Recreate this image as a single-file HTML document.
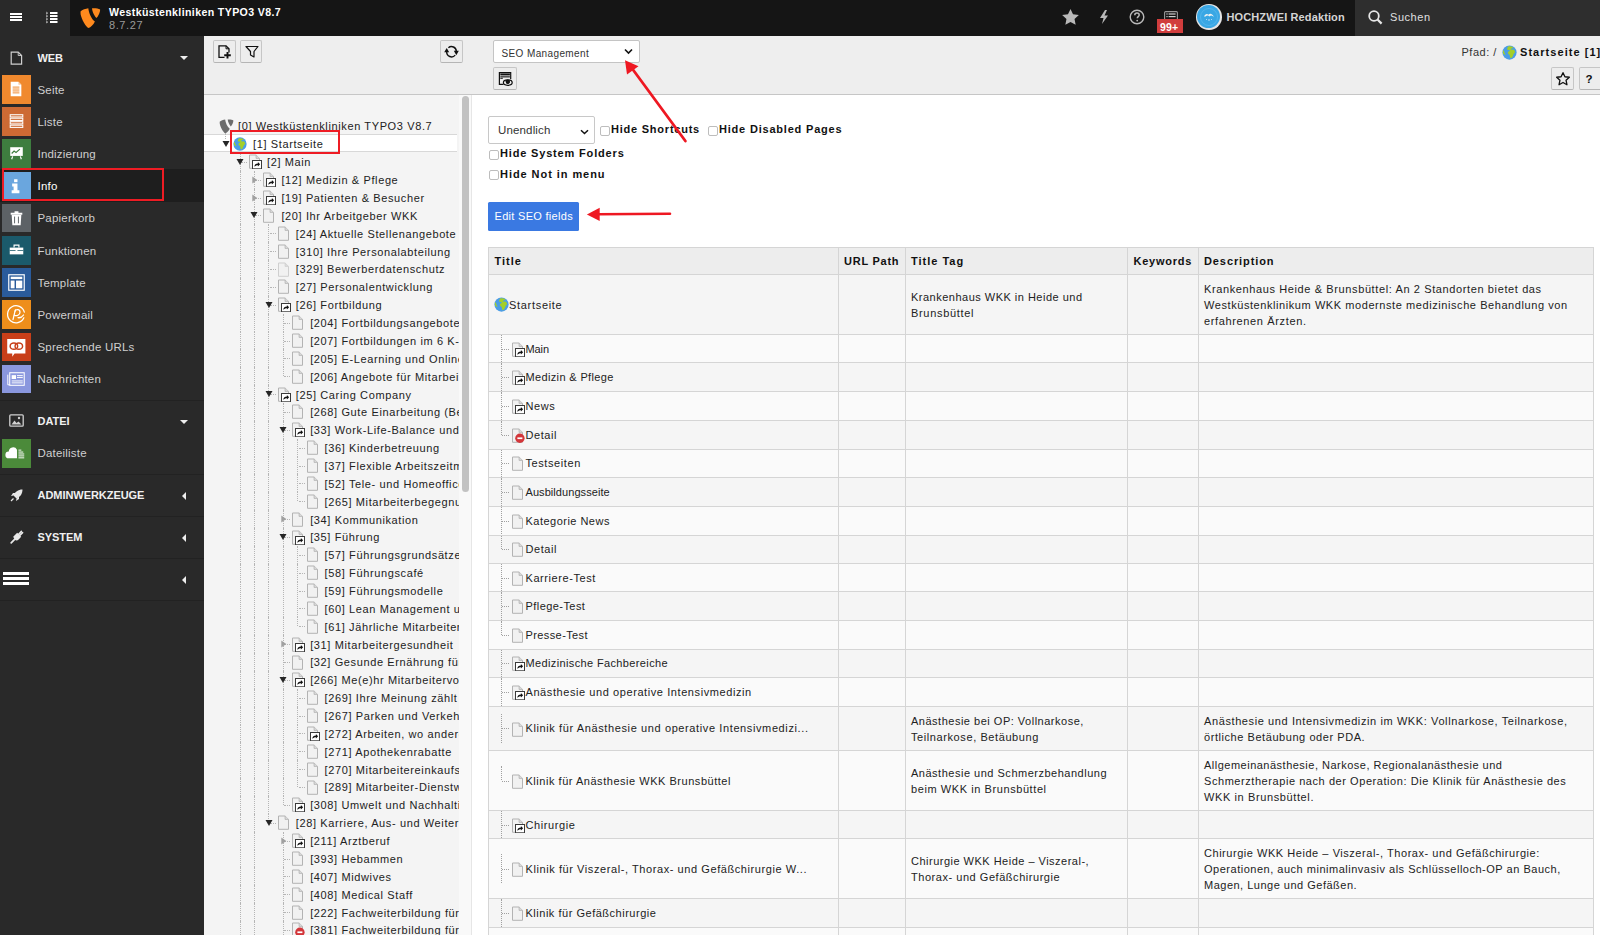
<!DOCTYPE html>
<html><head><meta charset="utf-8"><title>TYPO3 SEO</title><style>
*{box-sizing:border-box;margin:0;padding:0}
html,body{width:1600px;height:935px;overflow:hidden;background:#fff}
body{font-family:"Liberation Sans",sans-serif;font-size:11px;color:#000;position:relative}
.a{position:absolute}
.t{position:absolute;white-space:nowrap;line-height:1}
#top{left:0;top:0;width:1600px;height:36.4px;background:#151515;z-index:5}
#sb{left:0;top:36px;width:204px;height:899px;background:#292929}
#dh{left:204px;top:36px;width:1396px;height:59px;background:#eeeeee;border-bottom:1px solid #c6c6c6}
#tree{left:204px;top:95px;width:267px;height:840px;background:#f4f4f4;overflow:hidden}
#content{left:471px;top:95px;width:1129px;height:840px;background:#fff;border-left:1px solid #e6e6e6}
.btn{position:absolute;width:23px;height:23px;border:1px solid #c6c6c6;border-bottom-color:#b5b5b5;border-radius:2px;background:#ededed}
.sbi{position:absolute;left:2px;width:28.6px;height:28.6px;overflow:hidden}
.sbt{position:absolute;left:37.5px;color:#cfcfcf;font-size:11.5px;letter-spacing:0.2px;white-space:nowrap;line-height:1}
.sbh{position:absolute;left:37.5px;color:#f0f0f0;font-size:11px;font-weight:bold;letter-spacing:-0.05px;white-space:nowrap;line-height:1}
.sep{position:absolute;left:0;width:204px;height:1px;background:#222}
.tn{position:absolute;white-space:nowrap;line-height:1;font-size:11px;letter-spacing:0.62px;color:#222}
.cell{position:absolute;white-space:nowrap;font-size:11px;letter-spacing:0.58px;color:#222;line-height:16px}
.th{position:absolute;white-space:nowrap;font-size:11px;font-weight:bold;letter-spacing:0.75px;color:#111;line-height:1}
</style></head>
<body>

<div id="top" class="a">
<div class="a" style="left:0;top:0;width:70px;height:36.4px;background:#292929"></div>
<div class="a" style="left:10px;top:13px;width:12px;height:2px;background:#fff;box-shadow:0 3px 0 #fff,0 6px 0 #fff"></div>
<svg class="a" style="left:45px;top:11px" width="14" height="13" viewBox="0 0 14 13"><g fill="#fff"><rect x="5" y="1" width="7.5" height="2"/><rect x="5" y="4" width="7.5" height="2"/><rect x="5" y="7" width="7.5" height="2"/><rect x="5" y="10" width="7.5" height="2"/></g><g fill="#cfcfcf"><rect x="1.2" y="1.5" width="1.6" height="1.2"/><rect x="1.2" y="4.5" width="1.6" height="1.2"/><rect x="1.2" y="7.5" width="1.6" height="1.2"/><rect x="1.2" y="10.5" width="1.6" height="1.2"/><rect x="1.2" y="0.5" width=".6" height="12" opacity=".5"/></g></svg>
<svg class="a" style="left:76px;top:4px" width="30" height="28" viewBox="76 4 30 28"><path fill="#ff8a1e" d="M80.5 11.6C82 9.6 86 8.6 88.3 8.2C88.8 13 91.5 19 94.9 21.6C93.2 25 90.6 27.6 88.6 28C86 27 81.6 19.5 80.6 14.2Z"/><path fill="#ff8a1e" d="M92 8.3C95 8 98.5 8.5 100.1 9.6C100.2 12.5 98.2 16.5 96.4 18.1C94.5 16.5 92.2 11.6 92 8.3Z"/></svg>
<div class="t" style="left:109px;top:6.7px;color:#fff;font-weight:bold;font-size:10.6px;letter-spacing:0.38px">Westküstenkliniken TYPO3 V8.7</div>
<div class="t" style="left:109px;top:20px;color:#9a9a9a;font-size:11px;letter-spacing:0.6px">8.7.27</div>
<svg class="a" style="left:1062px;top:9px" width="17" height="16" viewBox="0 0 24 23"><path fill="#b9b9b9" d="M12 0l3.6 7.6 8.4 1-6.2 5.8 1.6 8.3L12 18.6l-7.4 4.1 1.6-8.3L0 8.6l8.4-1z"/></svg>
<svg class="a" style="left:1099px;top:10px" width="10" height="14" viewBox="0 0 10 14"><path fill="#b9b9b9" d="M6 0L1 8h3.5L3 14l6-8.5H5.5L8 0z"/></svg>
<svg class="a" style="left:1129px;top:9px" width="16" height="16" viewBox="0 0 16 16"><circle cx="8" cy="8" r="6.8" fill="none" stroke="#b9b9b9" stroke-width="1.4"/><path d="M5.8 6.2c0-1.3 1-2.1 2.2-2.1s2.2.8 2.2 2c0 1.5-1.9 1.6-1.9 3.1" fill="none" stroke="#b9b9b9" stroke-width="1.5"/><circle cx="8.2" cy="11.6" r="0.9" fill="#b9b9b9"/></svg>
<svg class="a" style="left:1163.5px;top:11px" width="14" height="9" viewBox="0 0 14 9"><rect x="0.6" y="0.6" width="12.8" height="9" rx="1" fill="none" stroke="#9a9a9a" stroke-width="1.1"/><g fill="#cfcfcf"><rect x="2.4" y="2.4" width="1.2" height="1.2"/><rect x="4.6" y="2.4" width="7" height="1.2"/><rect x="2.4" y="5" width="1.2" height="1.2"/><rect x="4.6" y="5" width="7" height="1.2"/></g></svg>
<div class="a" style="left:1156.5px;top:19px;width:26px;height:14px;background:#d13d3d"></div>
<div class="t" style="left:1160px;top:21.5px;color:#fff;font-weight:bold;font-size:10.5px;letter-spacing:0.2px">99+</div>
<div class="a" style="left:1196px;top:4.2px;width:25.5px;height:25.5px;border-radius:50%;background:#e4e4e4"></div>
<div class="a" style="left:1197.2px;top:5.4px;width:23.1px;height:23.1px;border-radius:50%;background:#3aa7e4"></div>
<div class="a" style="left:1199.5px;top:7.7px;width:18.5px;height:18.5px;border-radius:50%;border:1px solid #52b5ec"></div>
<svg class="a" style="left:1202px;top:10px" width="14" height="12" viewBox="0 0 14 12"><path d="M2 6.5C3 4 5 3 6.5 4.8C7.5 3 10 3 12 6.8L10.5 6C9.5 5 8.5 5.5 7.5 6.5C6.5 5.5 5 5 3.5 6.5z" fill="#f2f2f2"/><circle cx="7" cy="10" r=".8" fill="#cfe9fa"/><circle cx="4.5" cy="9.5" r=".5" fill="#cfe9fa"/><circle cx="9.5" cy="9.5" r=".5" fill="#cfe9fa"/></svg>
<div class="t" style="left:1226.5px;top:11.8px;color:#d4d4d4;font-weight:bold;font-size:11px;letter-spacing:0.12px">HOCHZWEI Redaktion</div>
<div class="a" style="left:1355px;top:0;width:245px;height:36.4px;background:#2e2e2e"></div>
<svg class="a" style="left:1368px;top:10px" width="15" height="15" viewBox="0 0 15 15"><circle cx="6" cy="6" r="4.8" fill="none" stroke="#e6e6e6" stroke-width="1.8"/><path d="M9.5 9.5L13.6 13.6" stroke="#e6e6e6" stroke-width="2.2"/></svg>
<div class="t" style="left:1390px;top:11.8px;color:#e0e0e0;font-size:11px;letter-spacing:0.55px">Suchen</div>
</div>
<div id="sb" class="a">
<svg class="a" style="left:10px;top:14.5px" width="13" height="14" viewBox="0 0 13 14"><path d="M1.2 1.1h7l3.4 3.4v8.6H1.2z" fill="none" stroke="#cfcfcf" stroke-width="1.2"/><path d="M8.2 1.1v3.4h3.4" fill="none" stroke="#cfcfcf" stroke-width=".9"/></svg>
<div class="sbh" style="top:16.9px">WEB</div>
<div class="a" style="left:180px;top:20px;width:0;height:0;border-left:4px solid transparent;border-right:4px solid transparent;border-top:4px solid #eee"></div>
<div class="sbi" style="top:39.0px;background:#f0892e"><svg width="29" height="29" viewBox="0 0 30 30"><path d="M9 7h8l3 3v12H9z" fill="#fff"/><path d="M17 7v3h3" fill="#f7c9a0"/><g fill="#f0892e"><rect x="11" y="12" width="7" height="1"/><rect x="11" y="14" width="7" height="1"/><rect x="11" y="16" width="7" height="1"/><rect x="11" y="18" width="7" height="1"/></g></svg></div>
<div class="sbt" style="top:48.6px;color:#cfcfcf">Seite</div>
<div class="sbi" style="top:71.2px;background:#cd6a34"><svg width="29" height="29" viewBox="0 0 30 30"><g fill="none" stroke="#fff" stroke-width="1.1"><rect x="8.5" y="8" width="13" height="2.3"/><rect x="8.5" y="11.6" width="13" height="2.3"/><rect x="8.5" y="15.2" width="13" height="2.3"/><rect x="8.5" y="18.8" width="13" height="2.3"/></g></svg></div>
<div class="sbt" style="top:80.8px;color:#cfcfcf">Liste</div>
<div class="sbi" style="top:103.4px;background:#3e7d3f"><svg width="29" height="29" viewBox="0 0 30 30"><rect x="8.5" y="8.5" width="13" height="9" fill="#fff"/><path d="M10 15l2.5-2.5 2 1.5 4-3.5" stroke="#3e7d3f" stroke-width="1.2" fill="none"/><path d="M11 18l-1 3M19 18l1 3" stroke="#fff" stroke-width="1.2"/></svg></div>
<div class="sbt" style="top:113.0px;color:#cfcfcf">Indizierung</div>
<div class="a" style="left:0;top:133.2px;width:204px;height:33px;background:#1e1e1e"></div>
<div class="sbi" style="top:135.6px;background:#6aa6de"><svg width="29" height="29" viewBox="0 0 30 30"><rect x="12.5" y="7.5" width="3.5" height="3" fill="#fff"/><path d="M10.5 12h5.5v7h2v3h-8v-3h2v-4h-1.5z" fill="#fff"/></svg></div>
<div class="sbt" style="top:145.2px;color:#ffffff">Info</div>
<div class="sbi" style="top:167.8px;background:#5d6266"><svg width="29" height="29" viewBox="0 0 30 30"><path d="M9 9h12v2H9z M13 7.5h4v1.5h-4z" fill="#fff"/><path d="M10 11.5h10l-.7 10.5h-8.6z" fill="#fff"/><path d="M13 13v7M17 13v7" stroke="#5d6266" stroke-width="1"/></svg></div>
<div class="sbt" style="top:177.4px;color:#cfcfcf">Papierkorb</div>
<div class="sbi" style="top:200.0px;background:#1b5a6b"><svg width="29" height="29" viewBox="0 0 30 30"><rect x="8" y="12" width="14" height="7" fill="#fff"/><path d="M12.5 12v-2.5h5V12" fill="none" stroke="#fff" stroke-width="1.2"/><rect x="8" y="14.6" width="14" height=".8" fill="#1b5a6b"/><rect x="14" y="14" width="2" height="2" fill="#fff"/></svg></div>
<div class="sbt" style="top:209.6px;color:#cfcfcf">Funktionen</div>
<div class="sbi" style="top:232.2px;background:#2a5b9b"><svg width="29" height="29" viewBox="0 0 30 30"><rect x="7" y="7" width="16" height="16" fill="none" stroke="#fff" stroke-width="1.2"/><rect x="9" y="9" width="12" height="2.5" fill="#fff"/><rect x="9" y="13" width="4" height="8" fill="#fff"/><rect x="14.5" y="13" width="6.5" height="8" fill="#fff"/></svg></div>
<div class="sbt" style="top:241.8px;color:#cfcfcf">Template</div>
<div class="sbi" style="top:264.4px;background:#ee8e1b"><svg width="29" height="29" viewBox="0 0 30 30"><g fill="none" stroke="#fff" stroke-width="1.3" stroke-linecap="round"><path d="M23.1 12.6A8.8 8.8 0 1 0 22.6 18.4"/><path d="M13.8 10.2L11.4 20.4"/><path d="M13.4 11.6C14.2 9.4 18.6 9.2 18.6 12.6C18.6 15.6 15 17 12.8 15.8"/><path d="M16.6 18.3C18.8 18.6 21 17.5 22.3 15.5"/></g></svg></div>
<div class="sbt" style="top:274.0px;color:#cfcfcf">Powermail</div>
<div class="sbi" style="top:296.6px;background:#c83f19"><svg width="29" height="29" viewBox="0 0 30 30"><path d="M5.4 6.3H24.2V21.2H13L10.6 24.6V21.2H5.4z" fill="#fff"/><g fill="none" stroke="#c83f19" stroke-width="1.5"><ellipse cx="12.3" cy="13.6" rx="3.9" ry="3.3"/><ellipse cx="17.4" cy="13.6" rx="3.9" ry="3.3"/></g></svg></div>
<div class="sbt" style="top:306.2px;color:#cfcfcf">Sprechende URLs</div>
<div class="sbi" style="top:328.8px;background:#8a97de"><svg width="29" height="29" viewBox="0 0 30 30"><rect x="8" y="8" width="15" height="13" fill="none" stroke="#fff" stroke-width="1.1"/><path d="M6 10v10.5h2" fill="none" stroke="#fff" stroke-width="1"/><rect x="10" y="10.5" width="4.5" height="4" fill="#fff"/><g fill="#fff"><rect x="15.5" y="10.5" width="6" height="1"/><rect x="15.5" y="12.5" width="6" height="1"/><rect x="10" y="16" width="11.5" height="1"/><rect x="10" y="18" width="11.5" height="1"/></g></svg></div>
<div class="sbt" style="top:338.4px;color:#cfcfcf">Nachrichten</div>
<div class="sep" style="top:363.5px"></div>
<svg class="a" style="left:9px;top:378px" width="15" height="13" viewBox="0 0 15 13"><rect x="0.8" y="0.8" width="13.4" height="11.4" rx="1" fill="none" stroke="#d0d0d0" stroke-width="1.3"/><path d="M2.5 10.5l3-4 2 2.5 2-1.5 3 3z" fill="#d0d0d0"/><circle cx="10" cy="4" r="1.2" fill="#d0d0d0"/></svg>
<div class="sbh" style="top:380px">DATEI</div>
<div class="a" style="left:180px;top:383.5px;width:0;height:0;border-left:4px solid transparent;border-right:4px solid transparent;border-top:4px solid #eee"></div>
<div class="sbi" style="top:403px;background:#4b8a3a"><svg width="29" height="29" viewBox="0 0 30 30"><path d="M7 20a3.5 3.5 0 010-7 4.5 4.5 0 018.5-2V20z" fill="#fff"/><g fill="#fff"><rect x="17" y="11" width="3" height="1"/><rect x="17" y="13" width="5" height="1"/><rect x="17" y="15" width="6" height="1"/><rect x="17" y="17" width="6" height="1"/><rect x="17" y="19" width="6" height="1"/></g></svg></div>
<div class="sbt" style="top:412.1px">Dateiliste</div>
<div class="sep" style="top:438px"></div>
<svg class="a" style="left:10px;top:453px" width="13" height="13" viewBox="0 0 13 13"><path d="M12.5 0.5C8 0.5 5 3 3.5 6.5L6.5 9.5C10 8 12.5 5 12.5 0.5z" fill="#e8e8e8"/><path d="M3.5 6.5L1 7l2-3h3zM6.5 9.5L6 12l3-2V7z" fill="#e8e8e8"/><path d="M3.5 9.5L1 12" stroke="#e8e8e8" stroke-width="1.3"/></svg>
<div class="sbh" style="top:454px">ADMINWERKZEUGE</div>
<div class="a" style="left:182px;top:455.5px;width:0;height:0;border-top:4px solid transparent;border-bottom:4px solid transparent;border-right:4px solid #eee"></div>
<div class="sep" style="top:480.4px"></div>
<svg class="a" style="left:9.5px;top:494px" width="14" height="14" viewBox="0 0 14 14"><g fill="#e8e8e8"><path d="M3.2 6.8L7.2 2.8L11.2 6.8L8.6 9.4A2.8 2.8 0 0 1 4.6 9.4z" /></g><path d="M8.6 4.2L11.4 1.4M9.8 5.4L12.6 2.6" stroke="#e8e8e8" stroke-width="1.5" stroke-linecap="round"/><path d="M4.6 9.4L1.2 12.8" stroke="#e8e8e8" stroke-width="1.7" stroke-linecap="round"/></svg>
<div class="sbh" style="top:496px">SYSTEM</div>
<div class="a" style="left:182px;top:497.5px;width:0;height:0;border-top:4px solid transparent;border-bottom:4px solid transparent;border-right:4px solid #eee"></div>
<div class="sep" style="top:522.2px"></div>
<div class="a" style="left:3px;top:536px;width:26px;height:3px;background:#fff;box-shadow:0 5px 0 #fff,0 10px 0 #fff"></div>
<div class="a" style="left:182px;top:540px;width:0;height:0;border-top:4px solid transparent;border-bottom:4px solid transparent;border-right:4px solid #eee"></div>
<div class="sep" style="top:564px"></div>
<div class="a" style="left:2px;top:131.8px;width:162px;height:33.6px;border:2px solid #ee1c24"></div>
</div>
<div id="dh" class="a">
<div class="btn" style="left:9px;top:4.299999999999997px;width:22.5px"><svg class="a" style="left:4px;top:4px" width="14" height="14" viewBox="0 0 14 14"><path d="M6.5 12.3H1V.8h7L11 3.8V7.5" fill="none" stroke="#111" stroke-width="1.3"/><path d="M8 .8v3h3" fill="none" stroke="#111" stroke-width="1"/><path d="M9.5 7v6.5M6.2 10.3h6.6" stroke="#111" stroke-width="1.9"/></svg></div>
<div class="btn" style="left:35.5px;top:4.299999999999997px;width:22.5px"><svg class="a" style="left:4px;top:4px" width="14" height="14" viewBox="0 0 14 14"><path d="M1 1.5h12L9 6.5v5.5L5.5 10V6.5z" fill="none" stroke="#111" stroke-width="1.2" stroke-linejoin="round"/></svg></div>
<div class="btn" style="left:236px;top:4.299999999999997px;width:22.5px"><svg class="a" style="left:-1px;top:-1px" width="23" height="23" viewBox="440 40.3 23 23"><g fill="none" stroke="#111" stroke-width="1.4"><path d="M448.4 48 A4.8 4.8 0 0 1 456.3 51.6"/><path d="M455.2 55.4 A4.8 4.8 0 0 1 446.7 52.1"/></g><path d="M444.2 52.6 L449.2 52.6 L446.7 48.2z" fill="#111"/><path d="M453.8 51.1 L458.8 51.1 L456.3 55.5z" fill="#111"/></svg></div>
<div class="a" style="left:289.2px;top:4.299999999999997px;width:146.5px;height:23px;background:#fff;border:1px solid #c4c4c4;border-radius:2px"></div>
<div class="t" style="left:297.5px;top:12.5px;color:#333;font-size:10px;letter-spacing:0.38px">SEO Management</div>
<svg class="a" style="left:420px;top:12px" width="9" height="7" viewBox="0 0 9 7"><path d="M1 1.5l3.5 3.5 3.5-3.5" fill="none" stroke="#111" stroke-width="1.6"/></svg>
<div class="btn" style="left:289px;top:31px;width:23.5px"><svg class="a" style="left:-1px;top:-1px" width="23.5" height="23" viewBox="493 67 23.5 23"><path d="M503.5 84.4H499.4V72.6H510.7V79" fill="none" stroke="#111" stroke-width="1.2"/><rect x="500.3" y="73.5" width="9.6" height="1.9" fill="#111"/><rect x="500.3" y="76.3" width="9.6" height="1.1" fill="#111"/><path d="M500.3 78.3h2.5" stroke="#111" stroke-width="1"/><ellipse cx="507.8" cy="82.6" rx="4.4" ry="2.7" fill="#ededed" stroke="#111" stroke-width="1.2"/><path d="M505.6 81.6A2.2 2.2 0 0 1 510 81.6A2.2 2.2 0 0 1 505.6 81.6" fill="#111"/><circle cx="507.8" cy="82.2" r="1.7" fill="#111"/></svg></div>
<div class="t" style="left:1257.5px;top:11.299999999999997px;color:#333;font-size:11px;letter-spacing:0.52px">Pfad: /</div>
<div class="a" style="left:1297.5px;top:9px;width:15px;height:15px"><svg width="15" height="15" viewBox="0 0 16 16"><circle cx="8" cy="8" r="7.6" fill="#4b9de6"/><path d="M6.6 1.6C8.4 1.2 10.6 1.5 12.2 2.6C11.6 3.4 10.4 3.3 9.6 3.9C9.2 4.5 10 5 10.8 5C11.6 5 12 4.6 12.6 5C13.4 5.6 13.8 6.6 14 7.6C13.4 8.4 12.6 9 12.2 10C11.8 11.2 11.4 12.4 10.6 13.4C10 14.2 9.2 14.4 8.8 13.6C8.4 12.6 8.6 11.4 8 10.6C7.4 9.8 6.4 9.6 6.2 8.6C6 7.6 6.8 6.8 7.6 6.6C8.2 6.4 8.4 5.8 7.8 5.4C7 5 6 5.6 5.6 4.8C5.3 4 5.8 2.8 6.6 1.6z" fill="#a3cf2a"/><path d="M1.2 5.6C2 6 2.6 6.8 2.6 7.8C2.6 8.8 3.4 9.4 3.8 10.2C3 10.6 2 10 1.3 9.2C0.9 8 0.9 6.6 1.2 5.6z" fill="#a3cf2a"/></svg></div>
<div class="t" style="left:1316px;top:11.299999999999997px;color:#111;font-weight:bold;font-size:11px;letter-spacing:1.05px">Startseite [1]</div>
<div class="btn" style="left:1347px;top:31px;width:22.5px"><svg class="a" style="left:3px;top:3px" width="16" height="16" viewBox="0 0 24 24"><path fill="none" stroke="#111" stroke-width="2" stroke-linejoin="round" d="M12 2.5l2.9 6.1 6.6.8-4.9 4.6 1.3 6.6L12 17.3l-5.9 3.3 1.3-6.6-4.9-4.6 6.6-.8z"/></svg></div>
<div class="btn" style="left:1374.5px;top:31px;width:30px"></div>
<div class="t" style="left:1381.5px;top:37.5px;color:#111;font-weight:bold;font-size:11.5px">?</div>
</div>
<div id="tree" class="a">
<svg class="a" style="left:14.5px;top:23.5px" width="15" height="15" viewBox="79.5 7.5 21.5 21.5"><path fill="#6c6c6c" d="M80.5 11.6C82 9.6 86 8.6 88.3 8.2C88.8 13 91.5 19 94.9 21.6C93.2 25 90.6 27.6 88.6 28C86 27 81.6 19.5 80.6 14.2Z"/><path fill="#6c6c6c" d="M92 8.3C95 8 98.5 8.5 100.1 9.6C100.2 12.5 98.2 16.5 96.4 18.1C94.5 16.5 92.2 11.6 92 8.3Z"/></svg>
<div class="tn" style="left:34px;top:25.599999999999994px">[0] Westküstenkliniken TYPO3 V8.7</div>
<div class="a" style="left:0;top:39px;width:253px;height:18px;background:#fff;border-top:1px solid #d8d8d8;border-bottom:1px solid #d8d8d8"></div>
<div class="a" style="left:21px;top:38px;width:1px;height:6px;border-left:1px dotted #b5b5b5"></div>
<svg class="a" style="left:17.6px;top:45.0px" width="8" height="8" viewBox="0 0 8 8"><path d="M0.5 1H7.5L4 7z" fill="#262626"/></svg>
<div class="a" style="left:29px;top:42.0px;width:14px;height:14px"><svg width="14" height="14" viewBox="0 0 16 16"><circle cx="8" cy="8" r="7.6" fill="#4b9de6"/><path d="M6.6 1.6C8.4 1.2 10.6 1.5 12.2 2.6C11.6 3.4 10.4 3.3 9.6 3.9C9.2 4.5 10 5 10.8 5C11.6 5 12 4.6 12.6 5C13.4 5.6 13.8 6.6 14 7.6C13.4 8.4 12.6 9 12.2 10C11.8 11.2 11.4 12.4 10.6 13.4C10 14.2 9.2 14.4 8.8 13.6C8.4 12.6 8.6 11.4 8 10.6C7.4 9.8 6.4 9.6 6.2 8.6C6 7.6 6.8 6.8 7.6 6.6C8.2 6.4 8.4 5.8 7.8 5.4C7 5 6 5.6 5.6 4.8C5.3 4 5.8 2.8 6.6 1.6z" fill="#a3cf2a"/><path d="M1.2 5.6C2 6 2.6 6.8 2.6 7.8C2.6 8.8 3.4 9.4 3.8 10.2C3 10.6 2 10 1.3 9.2C0.9 8 0.9 6.6 1.2 5.6z" fill="#a3cf2a"/></svg></div>
<div class="tn" style="left:49.0px;top:44.4px">[1] Startseite</div>
<div class="a" style="left:35.5px;top:57.9px;width:1px;height:17.9px;border-left:1px dotted #b5b5b5"></div>
<div class="a" style="left:37.0px;top:66.9px;width:6px;height:1px;border-top:1px dotted #b5b5b5"></div>
<svg class="a" style="left:32.0px;top:62.9px" width="8" height="8" viewBox="0 0 8 8"><path d="M0.5 1H7.5L4 7z" fill="#262626"/></svg>
<div class="a" style="left:45.0px;top:59.4px;width:13px;height:15px"><svg width="13" height="15" viewBox="0 0 13 15"><path d="M.5 1h6.6l3.4 3.4V14.3H.5z" fill="#f1f1f1" stroke="#b3b3b3"/><path d="M7.1 1v3.4h3.4" fill="#dcdcdc" stroke="#b3b3b3" stroke-width=".8"/><rect x="3.5" y="6.5" width="9" height="8.3" fill="#fff" stroke="#3a3a3a" stroke-width="1"/><path d="M5.3 12.8c.2-2.2 1.5-3.3 3.6-3.3v-1.4l2.2 2.2-2.2 2.2v-1.3c-1.4 0-2.6.5-3.6 1.6z" fill="#111"/></svg></div>
<div class="tn" style="left:63.0px;top:62.3px">[2] Main</div>
<div class="a" style="left:49.9px;top:75.8px;width:1px;height:17.9px;border-left:1px dotted #b5b5b5"></div>
<div class="a" style="left:51.4px;top:84.7px;width:6px;height:1px;border-top:1px dotted #b5b5b5"></div>
<div class="a" style="left:35.5px;top:75.8px;width:1px;height:17.9px;border-left:1px dotted #b5b5b5"></div>
<svg class="a" style="left:47.9px;top:80.7px" width="8" height="8" viewBox="0 0 8 8"><path d="M0.3 0.6V7.4L5.3 4z" fill="#a0a0a0"/></svg>
<div class="a" style="left:59.4px;top:77.2px;width:13px;height:15px"><svg width="13" height="15" viewBox="0 0 13 15"><path d="M.5 1h6.6l3.4 3.4V14.3H.5z" fill="#f1f1f1" stroke="#b3b3b3"/><path d="M7.1 1v3.4h3.4" fill="#dcdcdc" stroke="#b3b3b3" stroke-width=".8"/><rect x="3.5" y="6.5" width="9" height="8.3" fill="#fff" stroke="#3a3a3a" stroke-width="1"/><path d="M5.3 12.8c.2-2.2 1.5-3.3 3.6-3.3v-1.4l2.2 2.2-2.2 2.2v-1.3c-1.4 0-2.6.5-3.6 1.6z" fill="#111"/></svg></div>
<div class="tn" style="left:77.4px;top:80.1px">[12] Medizin &amp; Pflege</div>
<div class="a" style="left:49.9px;top:93.7px;width:1px;height:17.9px;border-left:1px dotted #b5b5b5"></div>
<div class="a" style="left:51.4px;top:102.6px;width:6px;height:1px;border-top:1px dotted #b5b5b5"></div>
<div class="a" style="left:35.5px;top:93.7px;width:1px;height:17.9px;border-left:1px dotted #b5b5b5"></div>
<svg class="a" style="left:47.9px;top:98.6px" width="8" height="8" viewBox="0 0 8 8"><path d="M0.3 0.6V7.4L5.3 4z" fill="#a0a0a0"/></svg>
<div class="a" style="left:59.4px;top:95.1px;width:13px;height:15px"><svg width="13" height="15" viewBox="0 0 13 15"><path d="M.5 1h6.6l3.4 3.4V14.3H.5z" fill="#f1f1f1" stroke="#b3b3b3"/><path d="M7.1 1v3.4h3.4" fill="#dcdcdc" stroke="#b3b3b3" stroke-width=".8"/><rect x="3.5" y="6.5" width="9" height="8.3" fill="#fff" stroke="#3a3a3a" stroke-width="1"/><path d="M5.3 12.8c.2-2.2 1.5-3.3 3.6-3.3v-1.4l2.2 2.2-2.2 2.2v-1.3c-1.4 0-2.6.5-3.6 1.6z" fill="#111"/></svg></div>
<div class="tn" style="left:77.4px;top:98.0px">[19] Patienten &amp; Besucher</div>
<div class="a" style="left:49.9px;top:111.5px;width:1px;height:17.9px;border-left:1px dotted #b5b5b5"></div>
<div class="a" style="left:51.4px;top:120.4px;width:6px;height:1px;border-top:1px dotted #b5b5b5"></div>
<div class="a" style="left:35.5px;top:111.5px;width:1px;height:17.9px;border-left:1px dotted #b5b5b5"></div>
<svg class="a" style="left:46.4px;top:116.4px" width="8" height="8" viewBox="0 0 8 8"><path d="M0.5 1H7.5L4 7z" fill="#262626"/></svg>
<div class="a" style="left:59.4px;top:112.9px;width:13px;height:15px"><svg width="13" height="15" viewBox="0 0 13 15"><path d="M.5 1h6.6l3.4 3.4V14.3H.5z" fill="#f1f1f1" stroke="#b3b3b3"/><path d="M7.1 1v3.4h3.4" fill="#dcdcdc" stroke="#b3b3b3" stroke-width=".8"/></svg></div>
<div class="tn" style="left:77.4px;top:115.8px">[20] Ihr Arbeitgeber WKK</div>
<div class="a" style="left:64.3px;top:129.4px;width:1px;height:17.9px;border-left:1px dotted #b5b5b5"></div>
<div class="a" style="left:65.8px;top:138.3px;width:6px;height:1px;border-top:1px dotted #b5b5b5"></div>
<div class="a" style="left:35.5px;top:129.4px;width:1px;height:17.9px;border-left:1px dotted #b5b5b5"></div>
<div class="a" style="left:49.9px;top:129.4px;width:1px;height:17.9px;border-left:1px dotted #b5b5b5"></div>
<div class="a" style="left:73.8px;top:130.8px;width:13px;height:15px"><svg width="13" height="15" viewBox="0 0 13 15"><path d="M.5 1h6.6l3.4 3.4V14.3H.5z" fill="#f1f1f1" stroke="#b3b3b3"/><path d="M7.1 1v3.4h3.4" fill="#dcdcdc" stroke="#b3b3b3" stroke-width=".8"/></svg></div>
<div class="tn" style="left:91.8px;top:133.7px">[24] Aktuelle Stellenangebote</div>
<div class="a" style="left:64.3px;top:147.2px;width:1px;height:17.9px;border-left:1px dotted #b5b5b5"></div>
<div class="a" style="left:65.8px;top:156.2px;width:6px;height:1px;border-top:1px dotted #b5b5b5"></div>
<div class="a" style="left:35.5px;top:147.2px;width:1px;height:17.9px;border-left:1px dotted #b5b5b5"></div>
<div class="a" style="left:49.9px;top:147.2px;width:1px;height:17.9px;border-left:1px dotted #b5b5b5"></div>
<div class="a" style="left:73.8px;top:148.7px;width:13px;height:15px"><svg width="13" height="15" viewBox="0 0 13 15"><path d="M.5 1h6.6l3.4 3.4V14.3H.5z" fill="#f1f1f1" stroke="#b3b3b3"/><path d="M7.1 1v3.4h3.4" fill="#dcdcdc" stroke="#b3b3b3" stroke-width=".8"/></svg></div>
<div class="tn" style="left:91.8px;top:151.6px">[310] Ihre Personalabteilung</div>
<div class="a" style="left:64.3px;top:165.1px;width:1px;height:17.9px;border-left:1px dotted #b5b5b5"></div>
<div class="a" style="left:65.8px;top:174.0px;width:6px;height:1px;border-top:1px dotted #b5b5b5"></div>
<div class="a" style="left:35.5px;top:165.1px;width:1px;height:17.9px;border-left:1px dotted #b5b5b5"></div>
<div class="a" style="left:49.9px;top:165.1px;width:1px;height:17.9px;border-left:1px dotted #b5b5b5"></div>
<div class="a" style="left:73.8px;top:166.5px;width:13px;height:15px"><svg width="13" height="15" viewBox="0 0 13 15"><path d="M.5 1h6.6l3.4 3.4V14.3H.5z" fill="#f1f1f1" stroke="#cfcfcf"/><path d="M7.1 1v3.4h3.4" fill="#dcdcdc" stroke="#cfcfcf" stroke-width=".8"/></svg></div>
<div class="tn" style="left:91.8px;top:169.4px">[329] Bewerberdatenschutz</div>
<div class="a" style="left:64.3px;top:183.0px;width:1px;height:17.9px;border-left:1px dotted #b5b5b5"></div>
<div class="a" style="left:65.8px;top:191.9px;width:6px;height:1px;border-top:1px dotted #b5b5b5"></div>
<div class="a" style="left:35.5px;top:183.0px;width:1px;height:17.9px;border-left:1px dotted #b5b5b5"></div>
<div class="a" style="left:49.9px;top:183.0px;width:1px;height:17.9px;border-left:1px dotted #b5b5b5"></div>
<div class="a" style="left:73.8px;top:184.4px;width:13px;height:15px"><svg width="13" height="15" viewBox="0 0 13 15"><path d="M.5 1h6.6l3.4 3.4V14.3H.5z" fill="#f1f1f1" stroke="#b3b3b3"/><path d="M7.1 1v3.4h3.4" fill="#dcdcdc" stroke="#b3b3b3" stroke-width=".8"/></svg></div>
<div class="tn" style="left:91.8px;top:187.3px">[27] Personalentwicklung</div>
<div class="a" style="left:64.3px;top:200.8px;width:1px;height:17.9px;border-left:1px dotted #b5b5b5"></div>
<div class="a" style="left:65.8px;top:209.8px;width:6px;height:1px;border-top:1px dotted #b5b5b5"></div>
<div class="a" style="left:35.5px;top:200.8px;width:1px;height:17.9px;border-left:1px dotted #b5b5b5"></div>
<div class="a" style="left:49.9px;top:200.8px;width:1px;height:17.9px;border-left:1px dotted #b5b5b5"></div>
<svg class="a" style="left:60.8px;top:205.8px" width="8" height="8" viewBox="0 0 8 8"><path d="M0.5 1H7.5L4 7z" fill="#262626"/></svg>
<div class="a" style="left:73.8px;top:202.3px;width:13px;height:15px"><svg width="13" height="15" viewBox="0 0 13 15"><path d="M.5 1h6.6l3.4 3.4V14.3H.5z" fill="#f1f1f1" stroke="#b3b3b3"/><path d="M7.1 1v3.4h3.4" fill="#dcdcdc" stroke="#b3b3b3" stroke-width=".8"/><rect x="3.5" y="6.5" width="9" height="8.3" fill="#fff" stroke="#3a3a3a" stroke-width="1"/><path d="M5.3 12.8c.2-2.2 1.5-3.3 3.6-3.3v-1.4l2.2 2.2-2.2 2.2v-1.3c-1.4 0-2.6.5-3.6 1.6z" fill="#111"/></svg></div>
<div class="tn" style="left:91.8px;top:205.2px">[26] Fortbildung</div>
<div class="a" style="left:78.7px;top:218.7px;width:1px;height:17.9px;border-left:1px dotted #b5b5b5"></div>
<div class="a" style="left:80.2px;top:227.6px;width:6px;height:1px;border-top:1px dotted #b5b5b5"></div>
<div class="a" style="left:35.5px;top:218.7px;width:1px;height:17.9px;border-left:1px dotted #b5b5b5"></div>
<div class="a" style="left:49.9px;top:218.7px;width:1px;height:17.9px;border-left:1px dotted #b5b5b5"></div>
<div class="a" style="left:64.3px;top:218.7px;width:1px;height:17.9px;border-left:1px dotted #b5b5b5"></div>
<div class="a" style="left:88.2px;top:220.1px;width:13px;height:15px"><svg width="13" height="15" viewBox="0 0 13 15"><path d="M.5 1h6.6l3.4 3.4V14.3H.5z" fill="#f1f1f1" stroke="#b3b3b3"/><path d="M7.1 1v3.4h3.4" fill="#dcdcdc" stroke="#b3b3b3" stroke-width=".8"/></svg></div>
<div class="tn" style="left:106.2px;top:223.0px">[204] Fortbildungsangebote</div>
<div class="a" style="left:78.7px;top:236.6px;width:1px;height:17.9px;border-left:1px dotted #b5b5b5"></div>
<div class="a" style="left:80.2px;top:245.5px;width:6px;height:1px;border-top:1px dotted #b5b5b5"></div>
<div class="a" style="left:35.5px;top:236.6px;width:1px;height:17.9px;border-left:1px dotted #b5b5b5"></div>
<div class="a" style="left:49.9px;top:236.6px;width:1px;height:17.9px;border-left:1px dotted #b5b5b5"></div>
<div class="a" style="left:64.3px;top:236.6px;width:1px;height:17.9px;border-left:1px dotted #b5b5b5"></div>
<div class="a" style="left:88.2px;top:238.0px;width:13px;height:15px"><svg width="13" height="15" viewBox="0 0 13 15"><path d="M.5 1h6.6l3.4 3.4V14.3H.5z" fill="#f1f1f1" stroke="#b3b3b3"/><path d="M7.1 1v3.4h3.4" fill="#dcdcdc" stroke="#b3b3b3" stroke-width=".8"/></svg></div>
<div class="tn" style="left:106.2px;top:240.9px">[207] Fortbildungen im 6 K-Modell</div>
<div class="a" style="left:78.7px;top:254.4px;width:1px;height:17.9px;border-left:1px dotted #b5b5b5"></div>
<div class="a" style="left:80.2px;top:263.3px;width:6px;height:1px;border-top:1px dotted #b5b5b5"></div>
<div class="a" style="left:35.5px;top:254.4px;width:1px;height:17.9px;border-left:1px dotted #b5b5b5"></div>
<div class="a" style="left:49.9px;top:254.4px;width:1px;height:17.9px;border-left:1px dotted #b5b5b5"></div>
<div class="a" style="left:64.3px;top:254.4px;width:1px;height:17.9px;border-left:1px dotted #b5b5b5"></div>
<div class="a" style="left:88.2px;top:255.8px;width:13px;height:15px"><svg width="13" height="15" viewBox="0 0 13 15"><path d="M.5 1h6.6l3.4 3.4V14.3H.5z" fill="#f1f1f1" stroke="#b3b3b3"/><path d="M7.1 1v3.4h3.4" fill="#dcdcdc" stroke="#b3b3b3" stroke-width=".8"/></svg></div>
<div class="tn" style="left:106.2px;top:258.7px">[205] E-Learning und Online-Kurse</div>
<div class="a" style="left:78.7px;top:272.3px;width:1px;height:8.9px;border-left:1px dotted #b5b5b5"></div>
<div class="a" style="left:80.2px;top:281.2px;width:6px;height:1px;border-top:1px dotted #b5b5b5"></div>
<div class="a" style="left:35.5px;top:272.3px;width:1px;height:17.9px;border-left:1px dotted #b5b5b5"></div>
<div class="a" style="left:49.9px;top:272.3px;width:1px;height:17.9px;border-left:1px dotted #b5b5b5"></div>
<div class="a" style="left:64.3px;top:272.3px;width:1px;height:17.9px;border-left:1px dotted #b5b5b5"></div>
<div class="a" style="left:88.2px;top:273.7px;width:13px;height:15px"><svg width="13" height="15" viewBox="0 0 13 15"><path d="M.5 1h6.6l3.4 3.4V14.3H.5z" fill="#f1f1f1" stroke="#b3b3b3"/><path d="M7.1 1v3.4h3.4" fill="#dcdcdc" stroke="#b3b3b3" stroke-width=".8"/></svg></div>
<div class="tn" style="left:106.2px;top:276.6px">[206] Angebote für Mitarbeiter</div>
<div class="a" style="left:64.3px;top:290.1px;width:1px;height:17.9px;border-left:1px dotted #b5b5b5"></div>
<div class="a" style="left:65.8px;top:299.1px;width:6px;height:1px;border-top:1px dotted #b5b5b5"></div>
<div class="a" style="left:35.5px;top:290.1px;width:1px;height:17.9px;border-left:1px dotted #b5b5b5"></div>
<div class="a" style="left:49.9px;top:290.1px;width:1px;height:17.9px;border-left:1px dotted #b5b5b5"></div>
<svg class="a" style="left:60.8px;top:295.1px" width="8" height="8" viewBox="0 0 8 8"><path d="M0.5 1H7.5L4 7z" fill="#262626"/></svg>
<div class="a" style="left:73.8px;top:291.6px;width:13px;height:15px"><svg width="13" height="15" viewBox="0 0 13 15"><path d="M.5 1h6.6l3.4 3.4V14.3H.5z" fill="#f1f1f1" stroke="#b3b3b3"/><path d="M7.1 1v3.4h3.4" fill="#dcdcdc" stroke="#b3b3b3" stroke-width=".8"/><rect x="3.5" y="6.5" width="9" height="8.3" fill="#fff" stroke="#3a3a3a" stroke-width="1"/><path d="M5.3 12.8c.2-2.2 1.5-3.3 3.6-3.3v-1.4l2.2 2.2-2.2 2.2v-1.3c-1.4 0-2.6.5-3.6 1.6z" fill="#111"/></svg></div>
<div class="tn" style="left:91.8px;top:294.5px">[25] Caring Company</div>
<div class="a" style="left:78.7px;top:308.0px;width:1px;height:17.9px;border-left:1px dotted #b5b5b5"></div>
<div class="a" style="left:80.2px;top:316.9px;width:6px;height:1px;border-top:1px dotted #b5b5b5"></div>
<div class="a" style="left:35.5px;top:308.0px;width:1px;height:17.9px;border-left:1px dotted #b5b5b5"></div>
<div class="a" style="left:49.9px;top:308.0px;width:1px;height:17.9px;border-left:1px dotted #b5b5b5"></div>
<div class="a" style="left:64.3px;top:308.0px;width:1px;height:17.9px;border-left:1px dotted #b5b5b5"></div>
<div class="a" style="left:88.2px;top:309.4px;width:13px;height:15px"><svg width="13" height="15" viewBox="0 0 13 15"><path d="M.5 1h6.6l3.4 3.4V14.3H.5z" fill="#f1f1f1" stroke="#b3b3b3"/><path d="M7.1 1v3.4h3.4" fill="#dcdcdc" stroke="#b3b3b3" stroke-width=".8"/></svg></div>
<div class="tn" style="left:106.2px;top:312.3px">[268] Gute Einarbeitung (Begleitung)</div>
<div class="a" style="left:78.7px;top:325.9px;width:1px;height:17.9px;border-left:1px dotted #b5b5b5"></div>
<div class="a" style="left:80.2px;top:334.8px;width:6px;height:1px;border-top:1px dotted #b5b5b5"></div>
<div class="a" style="left:35.5px;top:325.9px;width:1px;height:17.9px;border-left:1px dotted #b5b5b5"></div>
<div class="a" style="left:49.9px;top:325.9px;width:1px;height:17.9px;border-left:1px dotted #b5b5b5"></div>
<div class="a" style="left:64.3px;top:325.9px;width:1px;height:17.9px;border-left:1px dotted #b5b5b5"></div>
<svg class="a" style="left:75.2px;top:330.8px" width="8" height="8" viewBox="0 0 8 8"><path d="M0.5 1H7.5L4 7z" fill="#262626"/></svg>
<div class="a" style="left:88.2px;top:327.3px;width:13px;height:15px"><svg width="13" height="15" viewBox="0 0 13 15"><path d="M.5 1h6.6l3.4 3.4V14.3H.5z" fill="#f1f1f1" stroke="#b3b3b3"/><path d="M7.1 1v3.4h3.4" fill="#dcdcdc" stroke="#b3b3b3" stroke-width=".8"/><rect x="3.5" y="6.5" width="9" height="8.3" fill="#fff" stroke="#3a3a3a" stroke-width="1"/><path d="M5.3 12.8c.2-2.2 1.5-3.3 3.6-3.3v-1.4l2.2 2.2-2.2 2.2v-1.3c-1.4 0-2.6.5-3.6 1.6z" fill="#111"/></svg></div>
<div class="tn" style="left:106.2px;top:330.2px">[33] Work-Life-Balance und Familie</div>
<div class="a" style="left:93.1px;top:343.7px;width:1px;height:17.9px;border-left:1px dotted #b5b5b5"></div>
<div class="a" style="left:94.6px;top:352.7px;width:6px;height:1px;border-top:1px dotted #b5b5b5"></div>
<div class="a" style="left:35.5px;top:343.7px;width:1px;height:17.9px;border-left:1px dotted #b5b5b5"></div>
<div class="a" style="left:49.9px;top:343.7px;width:1px;height:17.9px;border-left:1px dotted #b5b5b5"></div>
<div class="a" style="left:64.3px;top:343.7px;width:1px;height:17.9px;border-left:1px dotted #b5b5b5"></div>
<div class="a" style="left:78.7px;top:343.7px;width:1px;height:17.9px;border-left:1px dotted #b5b5b5"></div>
<div class="a" style="left:102.6px;top:345.2px;width:13px;height:15px"><svg width="13" height="15" viewBox="0 0 13 15"><path d="M.5 1h6.6l3.4 3.4V14.3H.5z" fill="#f1f1f1" stroke="#b3b3b3"/><path d="M7.1 1v3.4h3.4" fill="#dcdcdc" stroke="#b3b3b3" stroke-width=".8"/></svg></div>
<div class="tn" style="left:120.6px;top:348.1px">[36] Kinderbetreuung</div>
<div class="a" style="left:93.1px;top:361.6px;width:1px;height:17.9px;border-left:1px dotted #b5b5b5"></div>
<div class="a" style="left:94.6px;top:370.5px;width:6px;height:1px;border-top:1px dotted #b5b5b5"></div>
<div class="a" style="left:35.5px;top:361.6px;width:1px;height:17.9px;border-left:1px dotted #b5b5b5"></div>
<div class="a" style="left:49.9px;top:361.6px;width:1px;height:17.9px;border-left:1px dotted #b5b5b5"></div>
<div class="a" style="left:64.3px;top:361.6px;width:1px;height:17.9px;border-left:1px dotted #b5b5b5"></div>
<div class="a" style="left:78.7px;top:361.6px;width:1px;height:17.9px;border-left:1px dotted #b5b5b5"></div>
<div class="a" style="left:102.6px;top:363.0px;width:13px;height:15px"><svg width="13" height="15" viewBox="0 0 13 15"><path d="M.5 1h6.6l3.4 3.4V14.3H.5z" fill="#f1f1f1" stroke="#b3b3b3"/><path d="M7.1 1v3.4h3.4" fill="#dcdcdc" stroke="#b3b3b3" stroke-width=".8"/></svg></div>
<div class="tn" style="left:120.6px;top:365.9px">[37] Flexible Arbeitszeitmodelle</div>
<div class="a" style="left:93.1px;top:379.4px;width:1px;height:17.9px;border-left:1px dotted #b5b5b5"></div>
<div class="a" style="left:94.6px;top:388.4px;width:6px;height:1px;border-top:1px dotted #b5b5b5"></div>
<div class="a" style="left:35.5px;top:379.4px;width:1px;height:17.9px;border-left:1px dotted #b5b5b5"></div>
<div class="a" style="left:49.9px;top:379.4px;width:1px;height:17.9px;border-left:1px dotted #b5b5b5"></div>
<div class="a" style="left:64.3px;top:379.4px;width:1px;height:17.9px;border-left:1px dotted #b5b5b5"></div>
<div class="a" style="left:78.7px;top:379.4px;width:1px;height:17.9px;border-left:1px dotted #b5b5b5"></div>
<div class="a" style="left:102.6px;top:380.9px;width:13px;height:15px"><svg width="13" height="15" viewBox="0 0 13 15"><path d="M.5 1h6.6l3.4 3.4V14.3H.5z" fill="#f1f1f1" stroke="#b3b3b3"/><path d="M7.1 1v3.4h3.4" fill="#dcdcdc" stroke="#b3b3b3" stroke-width=".8"/></svg></div>
<div class="tn" style="left:120.6px;top:383.8px">[52] Tele- und Homeoffice</div>
<div class="a" style="left:93.1px;top:397.3px;width:1px;height:8.9px;border-left:1px dotted #b5b5b5"></div>
<div class="a" style="left:94.6px;top:406.2px;width:6px;height:1px;border-top:1px dotted #b5b5b5"></div>
<div class="a" style="left:35.5px;top:397.3px;width:1px;height:17.9px;border-left:1px dotted #b5b5b5"></div>
<div class="a" style="left:49.9px;top:397.3px;width:1px;height:17.9px;border-left:1px dotted #b5b5b5"></div>
<div class="a" style="left:64.3px;top:397.3px;width:1px;height:17.9px;border-left:1px dotted #b5b5b5"></div>
<div class="a" style="left:78.7px;top:397.3px;width:1px;height:17.9px;border-left:1px dotted #b5b5b5"></div>
<div class="a" style="left:102.6px;top:398.7px;width:13px;height:15px"><svg width="13" height="15" viewBox="0 0 13 15"><path d="M.5 1h6.6l3.4 3.4V14.3H.5z" fill="#f1f1f1" stroke="#b3b3b3"/><path d="M7.1 1v3.4h3.4" fill="#dcdcdc" stroke="#b3b3b3" stroke-width=".8"/></svg></div>
<div class="tn" style="left:120.6px;top:401.6px">[265] Mitarbeiterbegegnungen</div>
<div class="a" style="left:78.7px;top:415.2px;width:1px;height:17.9px;border-left:1px dotted #b5b5b5"></div>
<div class="a" style="left:80.2px;top:424.1px;width:6px;height:1px;border-top:1px dotted #b5b5b5"></div>
<div class="a" style="left:35.5px;top:415.2px;width:1px;height:17.9px;border-left:1px dotted #b5b5b5"></div>
<div class="a" style="left:49.9px;top:415.2px;width:1px;height:17.9px;border-left:1px dotted #b5b5b5"></div>
<div class="a" style="left:64.3px;top:415.2px;width:1px;height:17.9px;border-left:1px dotted #b5b5b5"></div>
<svg class="a" style="left:76.7px;top:420.1px" width="8" height="8" viewBox="0 0 8 8"><path d="M0.3 0.6V7.4L5.3 4z" fill="#a0a0a0"/></svg>
<div class="a" style="left:88.2px;top:416.6px;width:13px;height:15px"><svg width="13" height="15" viewBox="0 0 13 15"><path d="M.5 1h6.6l3.4 3.4V14.3H.5z" fill="#f1f1f1" stroke="#b3b3b3"/><path d="M7.1 1v3.4h3.4" fill="#dcdcdc" stroke="#b3b3b3" stroke-width=".8"/></svg></div>
<div class="tn" style="left:106.2px;top:419.5px">[34] Kommunikation</div>
<div class="a" style="left:78.7px;top:433.0px;width:1px;height:17.9px;border-left:1px dotted #b5b5b5"></div>
<div class="a" style="left:80.2px;top:442.0px;width:6px;height:1px;border-top:1px dotted #b5b5b5"></div>
<div class="a" style="left:35.5px;top:433.0px;width:1px;height:17.9px;border-left:1px dotted #b5b5b5"></div>
<div class="a" style="left:49.9px;top:433.0px;width:1px;height:17.9px;border-left:1px dotted #b5b5b5"></div>
<div class="a" style="left:64.3px;top:433.0px;width:1px;height:17.9px;border-left:1px dotted #b5b5b5"></div>
<svg class="a" style="left:75.2px;top:438.0px" width="8" height="8" viewBox="0 0 8 8"><path d="M0.5 1H7.5L4 7z" fill="#262626"/></svg>
<div class="a" style="left:88.2px;top:434.5px;width:13px;height:15px"><svg width="13" height="15" viewBox="0 0 13 15"><path d="M.5 1h6.6l3.4 3.4V14.3H.5z" fill="#f1f1f1" stroke="#b3b3b3"/><path d="M7.1 1v3.4h3.4" fill="#dcdcdc" stroke="#b3b3b3" stroke-width=".8"/><rect x="3.5" y="6.5" width="9" height="8.3" fill="#fff" stroke="#3a3a3a" stroke-width="1"/><path d="M5.3 12.8c.2-2.2 1.5-3.3 3.6-3.3v-1.4l2.2 2.2-2.2 2.2v-1.3c-1.4 0-2.6.5-3.6 1.6z" fill="#111"/></svg></div>
<div class="tn" style="left:106.2px;top:437.4px">[35] Führung</div>
<div class="a" style="left:93.1px;top:450.9px;width:1px;height:17.9px;border-left:1px dotted #b5b5b5"></div>
<div class="a" style="left:94.6px;top:459.8px;width:6px;height:1px;border-top:1px dotted #b5b5b5"></div>
<div class="a" style="left:35.5px;top:450.9px;width:1px;height:17.9px;border-left:1px dotted #b5b5b5"></div>
<div class="a" style="left:49.9px;top:450.9px;width:1px;height:17.9px;border-left:1px dotted #b5b5b5"></div>
<div class="a" style="left:64.3px;top:450.9px;width:1px;height:17.9px;border-left:1px dotted #b5b5b5"></div>
<div class="a" style="left:78.7px;top:450.9px;width:1px;height:17.9px;border-left:1px dotted #b5b5b5"></div>
<div class="a" style="left:102.6px;top:452.3px;width:13px;height:15px"><svg width="13" height="15" viewBox="0 0 13 15"><path d="M.5 1h6.6l3.4 3.4V14.3H.5z" fill="#f1f1f1" stroke="#b3b3b3"/><path d="M7.1 1v3.4h3.4" fill="#dcdcdc" stroke="#b3b3b3" stroke-width=".8"/></svg></div>
<div class="tn" style="left:120.6px;top:455.2px">[57] Führungsgrundsätze</div>
<div class="a" style="left:93.1px;top:468.8px;width:1px;height:17.9px;border-left:1px dotted #b5b5b5"></div>
<div class="a" style="left:94.6px;top:477.7px;width:6px;height:1px;border-top:1px dotted #b5b5b5"></div>
<div class="a" style="left:35.5px;top:468.8px;width:1px;height:17.9px;border-left:1px dotted #b5b5b5"></div>
<div class="a" style="left:49.9px;top:468.8px;width:1px;height:17.9px;border-left:1px dotted #b5b5b5"></div>
<div class="a" style="left:64.3px;top:468.8px;width:1px;height:17.9px;border-left:1px dotted #b5b5b5"></div>
<div class="a" style="left:78.7px;top:468.8px;width:1px;height:17.9px;border-left:1px dotted #b5b5b5"></div>
<div class="a" style="left:102.6px;top:470.2px;width:13px;height:15px"><svg width="13" height="15" viewBox="0 0 13 15"><path d="M.5 1h6.6l3.4 3.4V14.3H.5z" fill="#f1f1f1" stroke="#b3b3b3"/><path d="M7.1 1v3.4h3.4" fill="#dcdcdc" stroke="#b3b3b3" stroke-width=".8"/></svg></div>
<div class="tn" style="left:120.6px;top:473.1px">[58] Führungscafé</div>
<div class="a" style="left:93.1px;top:486.6px;width:1px;height:17.9px;border-left:1px dotted #b5b5b5"></div>
<div class="a" style="left:94.6px;top:495.5px;width:6px;height:1px;border-top:1px dotted #b5b5b5"></div>
<div class="a" style="left:35.5px;top:486.6px;width:1px;height:17.9px;border-left:1px dotted #b5b5b5"></div>
<div class="a" style="left:49.9px;top:486.6px;width:1px;height:17.9px;border-left:1px dotted #b5b5b5"></div>
<div class="a" style="left:64.3px;top:486.6px;width:1px;height:17.9px;border-left:1px dotted #b5b5b5"></div>
<div class="a" style="left:78.7px;top:486.6px;width:1px;height:17.9px;border-left:1px dotted #b5b5b5"></div>
<div class="a" style="left:102.6px;top:488.0px;width:13px;height:15px"><svg width="13" height="15" viewBox="0 0 13 15"><path d="M.5 1h6.6l3.4 3.4V14.3H.5z" fill="#f1f1f1" stroke="#b3b3b3"/><path d="M7.1 1v3.4h3.4" fill="#dcdcdc" stroke="#b3b3b3" stroke-width=".8"/></svg></div>
<div class="tn" style="left:120.6px;top:490.9px">[59] Führungsmodelle</div>
<div class="a" style="left:93.1px;top:504.5px;width:1px;height:17.9px;border-left:1px dotted #b5b5b5"></div>
<div class="a" style="left:94.6px;top:513.4px;width:6px;height:1px;border-top:1px dotted #b5b5b5"></div>
<div class="a" style="left:35.5px;top:504.5px;width:1px;height:17.9px;border-left:1px dotted #b5b5b5"></div>
<div class="a" style="left:49.9px;top:504.5px;width:1px;height:17.9px;border-left:1px dotted #b5b5b5"></div>
<div class="a" style="left:64.3px;top:504.5px;width:1px;height:17.9px;border-left:1px dotted #b5b5b5"></div>
<div class="a" style="left:78.7px;top:504.5px;width:1px;height:17.9px;border-left:1px dotted #b5b5b5"></div>
<div class="a" style="left:102.6px;top:505.9px;width:13px;height:15px"><svg width="13" height="15" viewBox="0 0 13 15"><path d="M.5 1h6.6l3.4 3.4V14.3H.5z" fill="#f1f1f1" stroke="#b3b3b3"/><path d="M7.1 1v3.4h3.4" fill="#dcdcdc" stroke="#b3b3b3" stroke-width=".8"/></svg></div>
<div class="tn" style="left:120.6px;top:508.8px">[60] Lean Management und</div>
<div class="a" style="left:93.1px;top:522.3px;width:1px;height:8.9px;border-left:1px dotted #b5b5b5"></div>
<div class="a" style="left:94.6px;top:531.3px;width:6px;height:1px;border-top:1px dotted #b5b5b5"></div>
<div class="a" style="left:35.5px;top:522.3px;width:1px;height:17.9px;border-left:1px dotted #b5b5b5"></div>
<div class="a" style="left:49.9px;top:522.3px;width:1px;height:17.9px;border-left:1px dotted #b5b5b5"></div>
<div class="a" style="left:64.3px;top:522.3px;width:1px;height:17.9px;border-left:1px dotted #b5b5b5"></div>
<div class="a" style="left:78.7px;top:522.3px;width:1px;height:17.9px;border-left:1px dotted #b5b5b5"></div>
<div class="a" style="left:102.6px;top:523.8px;width:13px;height:15px"><svg width="13" height="15" viewBox="0 0 13 15"><path d="M.5 1h6.6l3.4 3.4V14.3H.5z" fill="#f1f1f1" stroke="#b3b3b3"/><path d="M7.1 1v3.4h3.4" fill="#dcdcdc" stroke="#b3b3b3" stroke-width=".8"/></svg></div>
<div class="tn" style="left:120.6px;top:526.7px">[61] Jährliche Mitarbeitergespräche</div>
<div class="a" style="left:78.7px;top:540.2px;width:1px;height:17.9px;border-left:1px dotted #b5b5b5"></div>
<div class="a" style="left:80.2px;top:549.1px;width:6px;height:1px;border-top:1px dotted #b5b5b5"></div>
<div class="a" style="left:35.5px;top:540.2px;width:1px;height:17.9px;border-left:1px dotted #b5b5b5"></div>
<div class="a" style="left:49.9px;top:540.2px;width:1px;height:17.9px;border-left:1px dotted #b5b5b5"></div>
<div class="a" style="left:64.3px;top:540.2px;width:1px;height:17.9px;border-left:1px dotted #b5b5b5"></div>
<svg class="a" style="left:76.7px;top:545.1px" width="8" height="8" viewBox="0 0 8 8"><path d="M0.3 0.6V7.4L5.3 4z" fill="#a0a0a0"/></svg>
<div class="a" style="left:88.2px;top:541.6px;width:13px;height:15px"><svg width="13" height="15" viewBox="0 0 13 15"><path d="M.5 1h6.6l3.4 3.4V14.3H.5z" fill="#f1f1f1" stroke="#b3b3b3"/><path d="M7.1 1v3.4h3.4" fill="#dcdcdc" stroke="#b3b3b3" stroke-width=".8"/><rect x="3.5" y="6.5" width="9" height="8.3" fill="#fff" stroke="#3a3a3a" stroke-width="1"/><path d="M5.3 12.8c.2-2.2 1.5-3.3 3.6-3.3v-1.4l2.2 2.2-2.2 2.2v-1.3c-1.4 0-2.6.5-3.6 1.6z" fill="#111"/></svg></div>
<div class="tn" style="left:106.2px;top:544.5px">[31] Mitarbeitergesundheit</div>
<div class="a" style="left:78.7px;top:558.1px;width:1px;height:17.9px;border-left:1px dotted #b5b5b5"></div>
<div class="a" style="left:80.2px;top:567.0px;width:6px;height:1px;border-top:1px dotted #b5b5b5"></div>
<div class="a" style="left:35.5px;top:558.1px;width:1px;height:17.9px;border-left:1px dotted #b5b5b5"></div>
<div class="a" style="left:49.9px;top:558.1px;width:1px;height:17.9px;border-left:1px dotted #b5b5b5"></div>
<div class="a" style="left:64.3px;top:558.1px;width:1px;height:17.9px;border-left:1px dotted #b5b5b5"></div>
<div class="a" style="left:88.2px;top:559.5px;width:13px;height:15px"><svg width="13" height="15" viewBox="0 0 13 15"><path d="M.5 1h6.6l3.4 3.4V14.3H.5z" fill="#f1f1f1" stroke="#b3b3b3"/><path d="M7.1 1v3.4h3.4" fill="#dcdcdc" stroke="#b3b3b3" stroke-width=".8"/></svg></div>
<div class="tn" style="left:106.2px;top:562.4px">[32] Gesunde Ernährung für</div>
<div class="a" style="left:78.7px;top:575.9px;width:1px;height:17.9px;border-left:1px dotted #b5b5b5"></div>
<div class="a" style="left:80.2px;top:584.9px;width:6px;height:1px;border-top:1px dotted #b5b5b5"></div>
<div class="a" style="left:35.5px;top:575.9px;width:1px;height:17.9px;border-left:1px dotted #b5b5b5"></div>
<div class="a" style="left:49.9px;top:575.9px;width:1px;height:17.9px;border-left:1px dotted #b5b5b5"></div>
<div class="a" style="left:64.3px;top:575.9px;width:1px;height:17.9px;border-left:1px dotted #b5b5b5"></div>
<svg class="a" style="left:75.2px;top:580.9px" width="8" height="8" viewBox="0 0 8 8"><path d="M0.5 1H7.5L4 7z" fill="#262626"/></svg>
<div class="a" style="left:88.2px;top:577.4px;width:13px;height:15px"><svg width="13" height="15" viewBox="0 0 13 15"><path d="M.5 1h6.6l3.4 3.4V14.3H.5z" fill="#f1f1f1" stroke="#b3b3b3"/><path d="M7.1 1v3.4h3.4" fill="#dcdcdc" stroke="#b3b3b3" stroke-width=".8"/><rect x="3.5" y="6.5" width="9" height="8.3" fill="#fff" stroke="#3a3a3a" stroke-width="1"/><path d="M5.3 12.8c.2-2.2 1.5-3.3 3.6-3.3v-1.4l2.2 2.2-2.2 2.2v-1.3c-1.4 0-2.6.5-3.6 1.6z" fill="#111"/></svg></div>
<div class="tn" style="left:106.2px;top:580.3px">[266] Me(e)hr Mitarbeitervorteile</div>
<div class="a" style="left:93.1px;top:593.8px;width:1px;height:17.9px;border-left:1px dotted #b5b5b5"></div>
<div class="a" style="left:94.6px;top:602.7px;width:6px;height:1px;border-top:1px dotted #b5b5b5"></div>
<div class="a" style="left:35.5px;top:593.8px;width:1px;height:17.9px;border-left:1px dotted #b5b5b5"></div>
<div class="a" style="left:49.9px;top:593.8px;width:1px;height:17.9px;border-left:1px dotted #b5b5b5"></div>
<div class="a" style="left:64.3px;top:593.8px;width:1px;height:17.9px;border-left:1px dotted #b5b5b5"></div>
<div class="a" style="left:78.7px;top:593.8px;width:1px;height:17.9px;border-left:1px dotted #b5b5b5"></div>
<div class="a" style="left:102.6px;top:595.2px;width:13px;height:15px"><svg width="13" height="15" viewBox="0 0 13 15"><path d="M.5 1h6.6l3.4 3.4V14.3H.5z" fill="#f1f1f1" stroke="#b3b3b3"/><path d="M7.1 1v3.4h3.4" fill="#dcdcdc" stroke="#b3b3b3" stroke-width=".8"/></svg></div>
<div class="tn" style="left:120.6px;top:598.1px">[269] Ihre Meinung zählt</div>
<div class="a" style="left:93.1px;top:611.7px;width:1px;height:17.9px;border-left:1px dotted #b5b5b5"></div>
<div class="a" style="left:94.6px;top:620.6px;width:6px;height:1px;border-top:1px dotted #b5b5b5"></div>
<div class="a" style="left:35.5px;top:611.7px;width:1px;height:17.9px;border-left:1px dotted #b5b5b5"></div>
<div class="a" style="left:49.9px;top:611.7px;width:1px;height:17.9px;border-left:1px dotted #b5b5b5"></div>
<div class="a" style="left:64.3px;top:611.7px;width:1px;height:17.9px;border-left:1px dotted #b5b5b5"></div>
<div class="a" style="left:78.7px;top:611.7px;width:1px;height:17.9px;border-left:1px dotted #b5b5b5"></div>
<div class="a" style="left:102.6px;top:613.1px;width:13px;height:15px"><svg width="13" height="15" viewBox="0 0 13 15"><path d="M.5 1h6.6l3.4 3.4V14.3H.5z" fill="#f1f1f1" stroke="#b3b3b3"/><path d="M7.1 1v3.4h3.4" fill="#dcdcdc" stroke="#b3b3b3" stroke-width=".8"/></svg></div>
<div class="tn" style="left:120.6px;top:616.0px">[267] Parken und Verkehr</div>
<div class="a" style="left:93.1px;top:629.5px;width:1px;height:17.9px;border-left:1px dotted #b5b5b5"></div>
<div class="a" style="left:94.6px;top:638.4px;width:6px;height:1px;border-top:1px dotted #b5b5b5"></div>
<div class="a" style="left:35.5px;top:629.5px;width:1px;height:17.9px;border-left:1px dotted #b5b5b5"></div>
<div class="a" style="left:49.9px;top:629.5px;width:1px;height:17.9px;border-left:1px dotted #b5b5b5"></div>
<div class="a" style="left:64.3px;top:629.5px;width:1px;height:17.9px;border-left:1px dotted #b5b5b5"></div>
<div class="a" style="left:78.7px;top:629.5px;width:1px;height:17.9px;border-left:1px dotted #b5b5b5"></div>
<div class="a" style="left:102.6px;top:630.9px;width:13px;height:15px"><svg width="13" height="15" viewBox="0 0 13 15"><path d="M.5 1h6.6l3.4 3.4V14.3H.5z" fill="#f1f1f1" stroke="#b3b3b3"/><path d="M7.1 1v3.4h3.4" fill="#dcdcdc" stroke="#b3b3b3" stroke-width=".8"/><rect x="3.5" y="6.5" width="9" height="8.3" fill="#fff" stroke="#3a3a3a" stroke-width="1"/><path d="M5.3 12.8c.2-2.2 1.5-3.3 3.6-3.3v-1.4l2.2 2.2-2.2 2.2v-1.3c-1.4 0-2.6.5-3.6 1.6z" fill="#111"/></svg></div>
<div class="tn" style="left:120.6px;top:633.8px">[272] Arbeiten, wo andere Urlaub machen</div>
<div class="a" style="left:93.1px;top:647.4px;width:1px;height:17.9px;border-left:1px dotted #b5b5b5"></div>
<div class="a" style="left:94.6px;top:656.3px;width:6px;height:1px;border-top:1px dotted #b5b5b5"></div>
<div class="a" style="left:35.5px;top:647.4px;width:1px;height:17.9px;border-left:1px dotted #b5b5b5"></div>
<div class="a" style="left:49.9px;top:647.4px;width:1px;height:17.9px;border-left:1px dotted #b5b5b5"></div>
<div class="a" style="left:64.3px;top:647.4px;width:1px;height:17.9px;border-left:1px dotted #b5b5b5"></div>
<div class="a" style="left:78.7px;top:647.4px;width:1px;height:17.9px;border-left:1px dotted #b5b5b5"></div>
<div class="a" style="left:102.6px;top:648.8px;width:13px;height:15px"><svg width="13" height="15" viewBox="0 0 13 15"><path d="M.5 1h6.6l3.4 3.4V14.3H.5z" fill="#f1f1f1" stroke="#b3b3b3"/><path d="M7.1 1v3.4h3.4" fill="#dcdcdc" stroke="#b3b3b3" stroke-width=".8"/></svg></div>
<div class="tn" style="left:120.6px;top:651.7px">[271] Apothekenrabatte</div>
<div class="a" style="left:93.1px;top:665.2px;width:1px;height:17.9px;border-left:1px dotted #b5b5b5"></div>
<div class="a" style="left:94.6px;top:674.2px;width:6px;height:1px;border-top:1px dotted #b5b5b5"></div>
<div class="a" style="left:35.5px;top:665.2px;width:1px;height:17.9px;border-left:1px dotted #b5b5b5"></div>
<div class="a" style="left:49.9px;top:665.2px;width:1px;height:17.9px;border-left:1px dotted #b5b5b5"></div>
<div class="a" style="left:64.3px;top:665.2px;width:1px;height:17.9px;border-left:1px dotted #b5b5b5"></div>
<div class="a" style="left:78.7px;top:665.2px;width:1px;height:17.9px;border-left:1px dotted #b5b5b5"></div>
<div class="a" style="left:102.6px;top:666.7px;width:13px;height:15px"><svg width="13" height="15" viewBox="0 0 13 15"><path d="M.5 1h6.6l3.4 3.4V14.3H.5z" fill="#f1f1f1" stroke="#b3b3b3"/><path d="M7.1 1v3.4h3.4" fill="#dcdcdc" stroke="#b3b3b3" stroke-width=".8"/></svg></div>
<div class="tn" style="left:120.6px;top:669.6px">[270] Mitarbeitereinkaufsvorteile</div>
<div class="a" style="left:93.1px;top:683.1px;width:1px;height:8.9px;border-left:1px dotted #b5b5b5"></div>
<div class="a" style="left:94.6px;top:692.0px;width:6px;height:1px;border-top:1px dotted #b5b5b5"></div>
<div class="a" style="left:35.5px;top:683.1px;width:1px;height:17.9px;border-left:1px dotted #b5b5b5"></div>
<div class="a" style="left:49.9px;top:683.1px;width:1px;height:17.9px;border-left:1px dotted #b5b5b5"></div>
<div class="a" style="left:64.3px;top:683.1px;width:1px;height:17.9px;border-left:1px dotted #b5b5b5"></div>
<div class="a" style="left:78.7px;top:683.1px;width:1px;height:17.9px;border-left:1px dotted #b5b5b5"></div>
<div class="a" style="left:102.6px;top:684.5px;width:13px;height:15px"><svg width="13" height="15" viewBox="0 0 13 15"><path d="M.5 1h6.6l3.4 3.4V14.3H.5z" fill="#f1f1f1" stroke="#b3b3b3"/><path d="M7.1 1v3.4h3.4" fill="#dcdcdc" stroke="#b3b3b3" stroke-width=".8"/></svg></div>
<div class="tn" style="left:120.6px;top:687.4px">[289] Mitarbeiter-Dienstwagen</div>
<div class="a" style="left:78.7px;top:701.0px;width:1px;height:8.9px;border-left:1px dotted #b5b5b5"></div>
<div class="a" style="left:80.2px;top:709.9px;width:6px;height:1px;border-top:1px dotted #b5b5b5"></div>
<div class="a" style="left:35.5px;top:701.0px;width:1px;height:17.9px;border-left:1px dotted #b5b5b5"></div>
<div class="a" style="left:49.9px;top:701.0px;width:1px;height:17.9px;border-left:1px dotted #b5b5b5"></div>
<div class="a" style="left:64.3px;top:701.0px;width:1px;height:17.9px;border-left:1px dotted #b5b5b5"></div>
<div class="a" style="left:88.2px;top:702.4px;width:13px;height:15px"><svg width="13" height="15" viewBox="0 0 13 15"><path d="M.5 1h6.6l3.4 3.4V14.3H.5z" fill="#f1f1f1" stroke="#b3b3b3"/><path d="M7.1 1v3.4h3.4" fill="#dcdcdc" stroke="#b3b3b3" stroke-width=".8"/><rect x="3.5" y="6.5" width="9" height="8.3" fill="#fff" stroke="#3a3a3a" stroke-width="1"/><path d="M5.3 12.8c.2-2.2 1.5-3.3 3.6-3.3v-1.4l2.2 2.2-2.2 2.2v-1.3c-1.4 0-2.6.5-3.6 1.6z" fill="#111"/></svg></div>
<div class="tn" style="left:106.2px;top:705.3px">[308] Umwelt und Nachhaltigkeit</div>
<div class="a" style="left:64.3px;top:718.8px;width:1px;height:8.9px;border-left:1px dotted #b5b5b5"></div>
<div class="a" style="left:65.8px;top:727.8px;width:6px;height:1px;border-top:1px dotted #b5b5b5"></div>
<div class="a" style="left:35.5px;top:718.8px;width:1px;height:17.9px;border-left:1px dotted #b5b5b5"></div>
<div class="a" style="left:49.9px;top:718.8px;width:1px;height:17.9px;border-left:1px dotted #b5b5b5"></div>
<svg class="a" style="left:60.8px;top:723.8px" width="8" height="8" viewBox="0 0 8 8"><path d="M0.5 1H7.5L4 7z" fill="#262626"/></svg>
<div class="a" style="left:73.8px;top:720.3px;width:13px;height:15px"><svg width="13" height="15" viewBox="0 0 13 15"><path d="M.5 1h6.6l3.4 3.4V14.3H.5z" fill="#f1f1f1" stroke="#b3b3b3"/><path d="M7.1 1v3.4h3.4" fill="#dcdcdc" stroke="#b3b3b3" stroke-width=".8"/></svg></div>
<div class="tn" style="left:91.8px;top:723.2px">[28] Karriere, Aus- und Weiterbildung</div>
<div class="a" style="left:78.7px;top:736.7px;width:1px;height:17.9px;border-left:1px dotted #b5b5b5"></div>
<div class="a" style="left:80.2px;top:745.6px;width:6px;height:1px;border-top:1px dotted #b5b5b5"></div>
<div class="a" style="left:35.5px;top:736.7px;width:1px;height:17.9px;border-left:1px dotted #b5b5b5"></div>
<div class="a" style="left:49.9px;top:736.7px;width:1px;height:17.9px;border-left:1px dotted #b5b5b5"></div>
<svg class="a" style="left:76.7px;top:741.6px" width="8" height="8" viewBox="0 0 8 8"><path d="M0.3 0.6V7.4L5.3 4z" fill="#a0a0a0"/></svg>
<div class="a" style="left:88.2px;top:738.1px;width:13px;height:15px"><svg width="13" height="15" viewBox="0 0 13 15"><path d="M.5 1h6.6l3.4 3.4V14.3H.5z" fill="#f1f1f1" stroke="#b3b3b3"/><path d="M7.1 1v3.4h3.4" fill="#dcdcdc" stroke="#b3b3b3" stroke-width=".8"/><rect x="3.5" y="6.5" width="9" height="8.3" fill="#fff" stroke="#3a3a3a" stroke-width="1"/><path d="M5.3 12.8c.2-2.2 1.5-3.3 3.6-3.3v-1.4l2.2 2.2-2.2 2.2v-1.3c-1.4 0-2.6.5-3.6 1.6z" fill="#111"/></svg></div>
<div class="tn" style="left:106.2px;top:741.0px">[211] Arztberuf</div>
<div class="a" style="left:78.7px;top:754.5px;width:1px;height:17.9px;border-left:1px dotted #b5b5b5"></div>
<div class="a" style="left:80.2px;top:763.5px;width:6px;height:1px;border-top:1px dotted #b5b5b5"></div>
<div class="a" style="left:35.5px;top:754.5px;width:1px;height:17.9px;border-left:1px dotted #b5b5b5"></div>
<div class="a" style="left:49.9px;top:754.5px;width:1px;height:17.9px;border-left:1px dotted #b5b5b5"></div>
<div class="a" style="left:88.2px;top:756.0px;width:13px;height:15px"><svg width="13" height="15" viewBox="0 0 13 15"><path d="M.5 1h6.6l3.4 3.4V14.3H.5z" fill="#f1f1f1" stroke="#b3b3b3"/><path d="M7.1 1v3.4h3.4" fill="#dcdcdc" stroke="#b3b3b3" stroke-width=".8"/></svg></div>
<div class="tn" style="left:106.2px;top:758.9px">[393] Hebammen</div>
<div class="a" style="left:78.7px;top:772.4px;width:1px;height:17.9px;border-left:1px dotted #b5b5b5"></div>
<div class="a" style="left:80.2px;top:781.3px;width:6px;height:1px;border-top:1px dotted #b5b5b5"></div>
<div class="a" style="left:35.5px;top:772.4px;width:1px;height:17.9px;border-left:1px dotted #b5b5b5"></div>
<div class="a" style="left:49.9px;top:772.4px;width:1px;height:17.9px;border-left:1px dotted #b5b5b5"></div>
<div class="a" style="left:88.2px;top:773.8px;width:13px;height:15px"><svg width="13" height="15" viewBox="0 0 13 15"><path d="M.5 1h6.6l3.4 3.4V14.3H.5z" fill="#f1f1f1" stroke="#b3b3b3"/><path d="M7.1 1v3.4h3.4" fill="#dcdcdc" stroke="#b3b3b3" stroke-width=".8"/></svg></div>
<div class="tn" style="left:106.2px;top:776.7px">[407] Midwives</div>
<div class="a" style="left:78.7px;top:790.3px;width:1px;height:17.9px;border-left:1px dotted #b5b5b5"></div>
<div class="a" style="left:80.2px;top:799.2px;width:6px;height:1px;border-top:1px dotted #b5b5b5"></div>
<div class="a" style="left:35.5px;top:790.3px;width:1px;height:17.9px;border-left:1px dotted #b5b5b5"></div>
<div class="a" style="left:49.9px;top:790.3px;width:1px;height:17.9px;border-left:1px dotted #b5b5b5"></div>
<div class="a" style="left:88.2px;top:791.7px;width:13px;height:15px"><svg width="13" height="15" viewBox="0 0 13 15"><path d="M.5 1h6.6l3.4 3.4V14.3H.5z" fill="#f1f1f1" stroke="#b3b3b3"/><path d="M7.1 1v3.4h3.4" fill="#dcdcdc" stroke="#b3b3b3" stroke-width=".8"/></svg></div>
<div class="tn" style="left:106.2px;top:794.6px">[408] Medical Staff</div>
<div class="a" style="left:78.7px;top:808.1px;width:1px;height:17.9px;border-left:1px dotted #b5b5b5"></div>
<div class="a" style="left:80.2px;top:817.1px;width:6px;height:1px;border-top:1px dotted #b5b5b5"></div>
<div class="a" style="left:35.5px;top:808.1px;width:1px;height:17.9px;border-left:1px dotted #b5b5b5"></div>
<div class="a" style="left:49.9px;top:808.1px;width:1px;height:17.9px;border-left:1px dotted #b5b5b5"></div>
<div class="a" style="left:88.2px;top:809.6px;width:13px;height:15px"><svg width="13" height="15" viewBox="0 0 13 15"><path d="M.5 1h6.6l3.4 3.4V14.3H.5z" fill="#f1f1f1" stroke="#b3b3b3"/><path d="M7.1 1v3.4h3.4" fill="#dcdcdc" stroke="#b3b3b3" stroke-width=".8"/></svg></div>
<div class="tn" style="left:106.2px;top:812.5px">[222] Fachweiterbildung für Intensivpflege</div>
<div class="a" style="left:78.7px;top:826.0px;width:1px;height:17.9px;border-left:1px dotted #b5b5b5"></div>
<div class="a" style="left:80.2px;top:834.9px;width:6px;height:1px;border-top:1px dotted #b5b5b5"></div>
<div class="a" style="left:35.5px;top:826.0px;width:1px;height:17.9px;border-left:1px dotted #b5b5b5"></div>
<div class="a" style="left:49.9px;top:826.0px;width:1px;height:17.9px;border-left:1px dotted #b5b5b5"></div>
<div class="a" style="left:88.2px;top:827.4px;width:13px;height:15px"><svg width="13" height="15" viewBox="0 0 13 15"><path d="M.5 1h6.6l3.4 3.4V14.3H.5z" fill="#f1f1f1" stroke="#b3b3b3"/><path d="M7.1 1v3.4h3.4" fill="#dcdcdc" stroke="#b3b3b3" stroke-width=".8"/><circle cx="7.9" cy="10.2" r="4.7" fill="#d3363a"/><rect x="5.4" y="9.4" width="5" height="1.7" fill="#fff"/></svg></div>
<div class="tn" style="left:106.2px;top:830.3px">[381] Fachweiterbildung für OP-Pflege</div>
<div class="a" style="left:78.7px;top:843.9px;width:1px;height:8.9px;border-left:1px dotted #b5b5b5"></div>
<div class="a" style="left:80.2px;top:852.8px;width:6px;height:1px;border-top:1px dotted #b5b5b5"></div>
<div class="a" style="left:35.5px;top:843.9px;width:1px;height:17.9px;border-left:1px dotted #b5b5b5"></div>
<div class="a" style="left:49.9px;top:843.9px;width:1px;height:17.9px;border-left:1px dotted #b5b5b5"></div>
<div class="a" style="left:88.2px;top:845.3px;width:13px;height:15px"><svg width="13" height="15" viewBox="0 0 13 15"><path d="M.5 1h6.6l3.4 3.4V14.3H.5z" fill="#f1f1f1" stroke="#b3b3b3"/><path d="M7.1 1v3.4h3.4" fill="#dcdcdc" stroke="#b3b3b3" stroke-width=".8"/></svg></div>
<div class="tn" style="left:106.2px;top:848.2px">[999] x</div>
<div class="a" style="left:49.9px;top:861.7px;width:1px;height:8.9px;border-left:1px dotted #b5b5b5"></div>
<div class="a" style="left:51.4px;top:870.7px;width:6px;height:1px;border-top:1px dotted #b5b5b5"></div>
<div class="a" style="left:35.5px;top:861.7px;width:1px;height:17.9px;border-left:1px dotted #b5b5b5"></div>
<div class="a" style="left:59.4px;top:863.2px;width:13px;height:15px"><svg width="13" height="15" viewBox="0 0 13 15"><path d="M.5 1h6.6l3.4 3.4V14.3H.5z" fill="#f1f1f1" stroke="#b3b3b3"/><path d="M7.1 1v3.4h3.4" fill="#dcdcdc" stroke="#b3b3b3" stroke-width=".8"/></svg></div>
<div class="tn" style="left:77.4px;top:866.1px">[998] x</div>
<div class="a" style="left:35.5px;top:879.6px;width:1px;height:8.9px;border-left:1px dotted #b5b5b5"></div>
<div class="a" style="left:37.0px;top:888.5px;width:6px;height:1px;border-top:1px dotted #b5b5b5"></div>
<div class="a" style="left:45.0px;top:881.0px;width:13px;height:15px"><svg width="13" height="15" viewBox="0 0 13 15"><path d="M.5 1h6.6l3.4 3.4V14.3H.5z" fill="#f1f1f1" stroke="#b3b3b3"/><path d="M7.1 1v3.4h3.4" fill="#dcdcdc" stroke="#b3b3b3" stroke-width=".8"/></svg></div>
<div class="tn" style="left:63.0px;top:883.9px">[997] x</div>
<div class="a" style="left:25.5px;top:35px;width:110px;height:23.5px;border:2px solid #ee1c24"></div>
<div class="a" style="left:254.5px;top:0;width:13px;height:840px;background:#f9f9f9"></div>
<div class="a" style="left:258px;top:1px;width:7px;height:396px;background:#c2c2c2;border-radius:3.5px"></div>
</div>
<div id="content" class="a">
<div class="a" style="left:16.19999999999999px;top:21.200000000000003px;width:106.5px;height:28px;background:#fff;border:1px solid #c8c8c8;border-radius:2px"></div>
<div class="t" style="left:26px;top:30px;color:#333;font-size:11.5px;letter-spacing:0.15px">Unendlich</div>
<svg class="a" style="left:107.5px;top:34px" width="9" height="6" viewBox="0 0 9 6"><path d="M1 1.2l3.5 3.3 3.5-3.3" fill="none" stroke="#111" stroke-width="1.5"/></svg>
<div class="a" style="left:128px;top:31px;width:10px;height:10px;border:1px solid #bdbdbd;border-radius:2px;background:#fff"></div>
<div class="th" style="left:139px;top:28.799999999999997px;letter-spacing:0.77px">Hide Shortcuts</div>
<div class="a" style="left:236px;top:31px;width:10px;height:10px;border:1px solid #bdbdbd;border-radius:2px;background:#fff"></div>
<div class="th" style="left:247px;top:28.799999999999997px;letter-spacing:0.8px">Hide Disabled Pages</div>
<div class="a" style="left:17px;top:54.5px;width:10px;height:10px;border:1px solid #bdbdbd;border-radius:2px;background:#fff"></div>
<div class="th" style="left:28px;top:52.599999999999994px;letter-spacing:0.83px">Hide System Folders</div>
<div class="a" style="left:17px;top:75px;width:10px;height:10px;border:1px solid #bdbdbd;border-radius:2px;background:#fff"></div>
<div class="th" style="left:28px;top:73.6px;letter-spacing:0.94px">Hide Not in menu</div>
<div class="a" style="left:16.100000000000023px;top:107.1px;width:91px;height:28.5px;background:#3a79e2;border-radius:1.5px"></div>
<div class="t" style="left:22.5px;top:116.4px;color:#fff;font-size:11px;letter-spacing:0.3px">Edit SEO fields</div>
<div class="a" style="left:16px;top:152px;width:1106px;height:688px;background:#f5f5f5;border:1px solid #d5d5d5"></div>
<div class="a" style="left:17px;top:153px;width:1104px;height:26.5px;background:#ededed"></div>
<div class="a" style="left:17px;top:239.2px;width:1104px;height:28.6px;background:#fafafa"></div>
<div class="a" style="left:17px;top:296.4px;width:1104px;height:29.0px;background:#fafafa"></div>
<div class="a" style="left:17px;top:354.0px;width:1104px;height:28.2px;background:#fafafa"></div>
<div class="a" style="left:17px;top:411.4px;width:1104px;height:28.6px;background:#fafafa"></div>
<div class="a" style="left:17px;top:468.3px;width:1104px;height:28.6px;background:#fafafa"></div>
<div class="a" style="left:17px;top:525.5px;width:1104px;height:28.6px;background:#fafafa"></div>
<div class="a" style="left:17px;top:582.3px;width:1104px;height:29.0px;background:#fafafa"></div>
<div class="a" style="left:17px;top:655.4px;width:1104px;height:60.1px;background:#fafafa"></div>
<div class="a" style="left:17px;top:743.8px;width:1104px;height:59.4px;background:#fafafa"></div>
<div class="a" style="left:17px;top:832.5px;width:1104px;height:28.5px;background:#fafafa"></div>
<div class="a" style="left:16px;top:179.0px;width:1106px;height:1px;background:#d5d5d5"></div>
<div class="a" style="left:16px;top:238.7px;width:1106px;height:1px;background:#d5d5d5"></div>
<div class="a" style="left:16px;top:267.3px;width:1106px;height:1px;background:#d5d5d5"></div>
<div class="a" style="left:16px;top:295.9px;width:1106px;height:1px;background:#d5d5d5"></div>
<div class="a" style="left:16px;top:324.9px;width:1106px;height:1px;background:#d5d5d5"></div>
<div class="a" style="left:16px;top:353.5px;width:1106px;height:1px;background:#d5d5d5"></div>
<div class="a" style="left:16px;top:381.7px;width:1106px;height:1px;background:#d5d5d5"></div>
<div class="a" style="left:16px;top:410.9px;width:1106px;height:1px;background:#d5d5d5"></div>
<div class="a" style="left:16px;top:439.5px;width:1106px;height:1px;background:#d5d5d5"></div>
<div class="a" style="left:16px;top:467.8px;width:1106px;height:1px;background:#d5d5d5"></div>
<div class="a" style="left:16px;top:496.4px;width:1106px;height:1px;background:#d5d5d5"></div>
<div class="a" style="left:16px;top:525.0px;width:1106px;height:1px;background:#d5d5d5"></div>
<div class="a" style="left:16px;top:553.6px;width:1106px;height:1px;background:#d5d5d5"></div>
<div class="a" style="left:16px;top:581.8px;width:1106px;height:1px;background:#d5d5d5"></div>
<div class="a" style="left:16px;top:610.8px;width:1106px;height:1px;background:#d5d5d5"></div>
<div class="a" style="left:16px;top:654.9px;width:1106px;height:1px;background:#d5d5d5"></div>
<div class="a" style="left:16px;top:715.0px;width:1106px;height:1px;background:#d5d5d5"></div>
<div class="a" style="left:16px;top:743.3px;width:1106px;height:1px;background:#d5d5d5"></div>
<div class="a" style="left:16px;top:802.7px;width:1106px;height:1px;background:#d5d5d5"></div>
<div class="a" style="left:16px;top:832.0px;width:1106px;height:1px;background:#d5d5d5"></div>
<div class="a" style="left:16px;top:860.5px;width:1106px;height:1px;background:#d5d5d5"></div>
<div class="a" style="left:365.5px;top:152px;width:1px;height:688px;background:#d5d5d5"></div>
<div class="a" style="left:432.5px;top:152px;width:1px;height:688px;background:#d5d5d5"></div>
<div class="a" style="left:655.0px;top:152px;width:1px;height:688px;background:#d5d5d5"></div>
<div class="a" style="left:725.5px;top:152px;width:1px;height:688px;background:#d5d5d5"></div>
<div class="th" style="left:22.5px;top:161px;letter-spacing:1.0px">Title</div>
<div class="th" style="left:372px;top:161px;letter-spacing:0.75px">URL Path</div>
<div class="th" style="left:439px;top:161px;letter-spacing:1.0px">Title Tag</div>
<div class="th" style="left:661.5px;top:161px;letter-spacing:0.75px">Keywords</div>
<div class="th" style="left:732px;top:161px;letter-spacing:0.9px">Description</div>
<div class="a" style="left:22px;top:201.9px;width:15px;height:15px"><svg width="15" height="15" viewBox="0 0 16 16"><circle cx="8" cy="8" r="7.6" fill="#4b9de6"/><path d="M6.6 1.6C8.4 1.2 10.6 1.5 12.2 2.6C11.6 3.4 10.4 3.3 9.6 3.9C9.2 4.5 10 5 10.8 5C11.6 5 12 4.6 12.6 5C13.4 5.6 13.8 6.6 14 7.6C13.4 8.4 12.6 9 12.2 10C11.8 11.2 11.4 12.4 10.6 13.4C10 14.2 9.2 14.4 8.8 13.6C8.4 12.6 8.6 11.4 8 10.6C7.4 9.8 6.4 9.6 6.2 8.6C6 7.6 6.8 6.8 7.6 6.6C8.2 6.4 8.4 5.8 7.8 5.4C7 5 6 5.6 5.6 4.8C5.3 4 5.8 2.8 6.6 1.6z" fill="#a3cf2a"/><path d="M1.2 5.6C2 6 2.6 6.8 2.6 7.8C2.6 8.8 3.4 9.4 3.8 10.2C3 10.6 2 10 1.3 9.2C0.9 8 0.9 6.6 1.2 5.6z" fill="#a3cf2a"/></svg></div>
<div class="cell" style="left:37px;top:202.0px;letter-spacing:0.691px">Startseite</div>
<div class="cell" style="left:439px;top:194.2px;letter-spacing:0.491px">Krankenhaus WKK in Heide und</div>
<div class="cell" style="left:439px;top:210.2px;letter-spacing:0.680px">Brunsbüttel</div>
<div class="cell" style="left:732px;top:186.2px;letter-spacing:0.614px">Krankenhaus Heide &amp; Brunsbüttel: An 2 Standorten bietet das</div>
<div class="cell" style="left:732px;top:202.2px;letter-spacing:0.572px">Westküstenklinikum WKK modernste medizinische Behandlung von</div>
<div class="cell" style="left:732px;top:218.2px;letter-spacing:0.639px">erfahrenen Ärzten.</div>
<div class="a" style="left:28.5px;top:239.7px;width:1px;height:27.6px;border-left:1px dotted #a0a0a0"></div>
<div class="a" style="left:30px;top:253.5px;width:7px;height:1px;border-top:1px dotted #a0a0a0"></div>
<div class="a" style="left:40px;top:246.7px;width:13px;height:15px"><svg width="13" height="15" viewBox="0 0 13 15"><path d="M.5 1h6.6l3.4 3.4V14.3H.5z" fill="#f1f1f1" stroke="#b3b3b3"/><path d="M7.1 1v3.4h3.4" fill="#dcdcdc" stroke="#b3b3b3" stroke-width=".8"/><rect x="3.5" y="6.5" width="9" height="8.3" fill="#fff" stroke="#3a3a3a" stroke-width="1"/><path d="M5.3 12.8c.2-2.2 1.5-3.3 3.6-3.3v-1.4l2.2 2.2-2.2 2.2v-1.3c-1.4 0-2.6.5-3.6 1.6z" fill="#111"/></svg></div>
<div class="cell" style="left:53.5px;top:245.5px;letter-spacing:-0.087px">Main</div>
<div class="a" style="left:28.5px;top:268.3px;width:1px;height:27.6px;border-left:1px dotted #a0a0a0"></div>
<div class="a" style="left:30px;top:282.1px;width:7px;height:1px;border-top:1px dotted #a0a0a0"></div>
<div class="a" style="left:40px;top:275.3px;width:13px;height:15px"><svg width="13" height="15" viewBox="0 0 13 15"><path d="M.5 1h6.6l3.4 3.4V14.3H.5z" fill="#f1f1f1" stroke="#b3b3b3"/><path d="M7.1 1v3.4h3.4" fill="#dcdcdc" stroke="#b3b3b3" stroke-width=".8"/><rect x="3.5" y="6.5" width="9" height="8.3" fill="#fff" stroke="#3a3a3a" stroke-width="1"/><path d="M5.3 12.8c.2-2.2 1.5-3.3 3.6-3.3v-1.4l2.2 2.2-2.2 2.2v-1.3c-1.4 0-2.6.5-3.6 1.6z" fill="#111"/></svg></div>
<div class="cell" style="left:53.5px;top:274.1px;letter-spacing:0.353px">Medizin &amp; Pflege</div>
<div class="a" style="left:28.5px;top:296.9px;width:1px;height:28.0px;border-left:1px dotted #a0a0a0"></div>
<div class="a" style="left:30px;top:310.9px;width:7px;height:1px;border-top:1px dotted #a0a0a0"></div>
<div class="a" style="left:40px;top:304.1px;width:13px;height:15px"><svg width="13" height="15" viewBox="0 0 13 15"><path d="M.5 1h6.6l3.4 3.4V14.3H.5z" fill="#f1f1f1" stroke="#b3b3b3"/><path d="M7.1 1v3.4h3.4" fill="#dcdcdc" stroke="#b3b3b3" stroke-width=".8"/><rect x="3.5" y="6.5" width="9" height="8.3" fill="#fff" stroke="#3a3a3a" stroke-width="1"/><path d="M5.3 12.8c.2-2.2 1.5-3.3 3.6-3.3v-1.4l2.2 2.2-2.2 2.2v-1.3c-1.4 0-2.6.5-3.6 1.6z" fill="#111"/></svg></div>
<div class="cell" style="left:53.5px;top:302.9px;letter-spacing:0.580px">News</div>
<div class="a" style="left:28.5px;top:325.9px;width:1px;height:13.8px;border-left:1px dotted #a0a0a0"></div>
<div class="a" style="left:30px;top:339.7px;width:7px;height:1px;border-top:1px dotted #a0a0a0"></div>
<div class="a" style="left:40px;top:332.9px;width:13px;height:15px"><svg width="13" height="15" viewBox="0 0 13 15"><path d="M.5 1h6.6l3.4 3.4V14.3H.5z" fill="#f1f1f1" stroke="#b3b3b3"/><path d="M7.1 1v3.4h3.4" fill="#dcdcdc" stroke="#b3b3b3" stroke-width=".8"/><circle cx="7.9" cy="10.2" r="4.7" fill="#d3363a"/><rect x="5.4" y="9.4" width="5" height="1.7" fill="#fff"/></svg></div>
<div class="cell" style="left:53.5px;top:331.7px;letter-spacing:0.580px">Detail</div>
<div class="a" style="left:28.5px;top:354.5px;width:1px;height:27.2px;border-left:1px dotted #a0a0a0"></div>
<div class="a" style="left:30px;top:368.1px;width:7px;height:1px;border-top:1px dotted #a0a0a0"></div>
<div class="a" style="left:40px;top:361.3px;width:13px;height:15px"><svg width="13" height="15" viewBox="0 0 13 15"><path d="M.5 1h6.6l3.4 3.4V14.3H.5z" fill="#f1f1f1" stroke="#b3b3b3"/><path d="M7.1 1v3.4h3.4" fill="#dcdcdc" stroke="#b3b3b3" stroke-width=".8"/></svg></div>
<div class="cell" style="left:53.5px;top:360.1px;letter-spacing:0.580px">Testseiten</div>
<div class="a" style="left:28.5px;top:382.7px;width:1px;height:28.2px;border-left:1px dotted #a0a0a0"></div>
<div class="a" style="left:30px;top:396.8px;width:7px;height:1px;border-top:1px dotted #a0a0a0"></div>
<div class="a" style="left:40px;top:390.0px;width:13px;height:15px"><svg width="13" height="15" viewBox="0 0 13 15"><path d="M.5 1h6.6l3.4 3.4V14.3H.5z" fill="#f1f1f1" stroke="#b3b3b3"/><path d="M7.1 1v3.4h3.4" fill="#dcdcdc" stroke="#b3b3b3" stroke-width=".8"/></svg></div>
<div class="cell" style="left:53.5px;top:388.8px;letter-spacing:0.067px">Ausbildungsseite</div>
<div class="a" style="left:28.5px;top:411.9px;width:1px;height:27.6px;border-left:1px dotted #a0a0a0"></div>
<div class="a" style="left:30px;top:425.7px;width:7px;height:1px;border-top:1px dotted #a0a0a0"></div>
<div class="a" style="left:40px;top:418.9px;width:13px;height:15px"><svg width="13" height="15" viewBox="0 0 13 15"><path d="M.5 1h6.6l3.4 3.4V14.3H.5z" fill="#f1f1f1" stroke="#b3b3b3"/><path d="M7.1 1v3.4h3.4" fill="#dcdcdc" stroke="#b3b3b3" stroke-width=".8"/></svg></div>
<div class="cell" style="left:53.5px;top:417.7px;letter-spacing:0.480px">Kategorie News</div>
<div class="a" style="left:28.5px;top:440.5px;width:1px;height:13.6px;border-left:1px dotted #a0a0a0"></div>
<div class="a" style="left:30px;top:454.1px;width:7px;height:1px;border-top:1px dotted #a0a0a0"></div>
<div class="a" style="left:40px;top:447.3px;width:13px;height:15px"><svg width="13" height="15" viewBox="0 0 13 15"><path d="M.5 1h6.6l3.4 3.4V14.3H.5z" fill="#f1f1f1" stroke="#b3b3b3"/><path d="M7.1 1v3.4h3.4" fill="#dcdcdc" stroke="#b3b3b3" stroke-width=".8"/></svg></div>
<div class="cell" style="left:53.5px;top:446.1px;letter-spacing:0.580px">Detail</div>
<div class="a" style="left:28.5px;top:468.8px;width:1px;height:27.6px;border-left:1px dotted #a0a0a0"></div>
<div class="a" style="left:30px;top:482.6px;width:7px;height:1px;border-top:1px dotted #a0a0a0"></div>
<div class="a" style="left:40px;top:475.8px;width:13px;height:15px"><svg width="13" height="15" viewBox="0 0 13 15"><path d="M.5 1h6.6l3.4 3.4V14.3H.5z" fill="#f1f1f1" stroke="#b3b3b3"/><path d="M7.1 1v3.4h3.4" fill="#dcdcdc" stroke="#b3b3b3" stroke-width=".8"/></svg></div>
<div class="cell" style="left:53.5px;top:474.6px;letter-spacing:0.580px">Karriere-Test</div>
<div class="a" style="left:28.5px;top:497.4px;width:1px;height:27.6px;border-left:1px dotted #a0a0a0"></div>
<div class="a" style="left:30px;top:511.2px;width:7px;height:1px;border-top:1px dotted #a0a0a0"></div>
<div class="a" style="left:40px;top:504.4px;width:13px;height:15px"><svg width="13" height="15" viewBox="0 0 13 15"><path d="M.5 1h6.6l3.4 3.4V14.3H.5z" fill="#f1f1f1" stroke="#b3b3b3"/><path d="M7.1 1v3.4h3.4" fill="#dcdcdc" stroke="#b3b3b3" stroke-width=".8"/></svg></div>
<div class="cell" style="left:53.5px;top:503.2px;letter-spacing:0.440px">Pflege-Test</div>
<div class="a" style="left:28.5px;top:526.0px;width:1px;height:13.8px;border-left:1px dotted #a0a0a0"></div>
<div class="a" style="left:30px;top:539.8px;width:7px;height:1px;border-top:1px dotted #a0a0a0"></div>
<div class="a" style="left:40px;top:533.0px;width:13px;height:15px"><svg width="13" height="15" viewBox="0 0 13 15"><path d="M.5 1h6.6l3.4 3.4V14.3H.5z" fill="#f1f1f1" stroke="#b3b3b3"/><path d="M7.1 1v3.4h3.4" fill="#dcdcdc" stroke="#b3b3b3" stroke-width=".8"/></svg></div>
<div class="cell" style="left:53.5px;top:531.8px;letter-spacing:0.400px">Presse-Test</div>
<div class="a" style="left:28.5px;top:554.6px;width:1px;height:27.2px;border-left:1px dotted #a0a0a0"></div>
<div class="a" style="left:30px;top:568.2px;width:7px;height:1px;border-top:1px dotted #a0a0a0"></div>
<div class="a" style="left:40px;top:561.4px;width:13px;height:15px"><svg width="13" height="15" viewBox="0 0 13 15"><path d="M.5 1h6.6l3.4 3.4V14.3H.5z" fill="#f1f1f1" stroke="#b3b3b3"/><path d="M7.1 1v3.4h3.4" fill="#dcdcdc" stroke="#b3b3b3" stroke-width=".8"/><rect x="3.5" y="6.5" width="9" height="8.3" fill="#fff" stroke="#3a3a3a" stroke-width="1"/><path d="M5.3 12.8c.2-2.2 1.5-3.3 3.6-3.3v-1.4l2.2 2.2-2.2 2.2v-1.3c-1.4 0-2.6.5-3.6 1.6z" fill="#111"/></svg></div>
<div class="cell" style="left:53.5px;top:560.2px;letter-spacing:0.367px">Medizinische Fachbereiche</div>
<div class="a" style="left:28.5px;top:582.8px;width:1px;height:28.0px;border-left:1px dotted #a0a0a0"></div>
<div class="a" style="left:30px;top:596.8px;width:7px;height:1px;border-top:1px dotted #a0a0a0"></div>
<div class="a" style="left:40px;top:590.0px;width:13px;height:15px"><svg width="13" height="15" viewBox="0 0 13 15"><path d="M.5 1h6.6l3.4 3.4V14.3H.5z" fill="#f1f1f1" stroke="#b3b3b3"/><path d="M7.1 1v3.4h3.4" fill="#dcdcdc" stroke="#b3b3b3" stroke-width=".8"/><rect x="3.5" y="6.5" width="9" height="8.3" fill="#fff" stroke="#3a3a3a" stroke-width="1"/><path d="M5.3 12.8c.2-2.2 1.5-3.3 3.6-3.3v-1.4l2.2 2.2-2.2 2.2v-1.3c-1.4 0-2.6.5-3.6 1.6z" fill="#111"/></svg></div>
<div class="cell" style="left:53.5px;top:588.8px;letter-spacing:0.580px">Anästhesie und operative Intensivmedizin</div>
<div class="a" style="left:28.5px;top:619.0px;width:1px;height:28.6px;border-left:1px dotted #a0a0a0"></div>
<div class="a" style="left:30px;top:633.3px;width:7px;height:1px;border-top:1px dotted #a0a0a0"></div>
<div class="a" style="left:40px;top:626.5px;width:13px;height:15px"><svg width="13" height="15" viewBox="0 0 13 15"><path d="M.5 1h6.6l3.4 3.4V14.3H.5z" fill="#f1f1f1" stroke="#b3b3b3"/><path d="M7.1 1v3.4h3.4" fill="#dcdcdc" stroke="#b3b3b3" stroke-width=".8"/></svg></div>
<div class="cell" style="left:53.5px;top:625.3px;letter-spacing:0.611px">Klinik für Anästhesie und operative Intensivmedizi...</div>
<div class="cell" style="left:439px;top:618.1px;letter-spacing:0.507px">Anästhesie bei OP: Vollnarkose,</div>
<div class="cell" style="left:439px;top:634.1px;letter-spacing:0.590px">Teilnarkose, Betäubung</div>
<div class="cell" style="left:732px;top:618.1px;letter-spacing:0.602px">Anästhesie und Intensivmedizin im WKK: Vollnarkose, Teilnarkose,</div>
<div class="cell" style="left:732px;top:634.1px;letter-spacing:0.558px">örtliche Betäubung oder PDA.</div>
<div class="a" style="left:28.5px;top:671.2px;width:1px;height:14.3px;border-left:1px dotted #a0a0a0"></div>
<div class="a" style="left:30px;top:685.5px;width:7px;height:1px;border-top:1px dotted #a0a0a0"></div>
<div class="a" style="left:40px;top:678.7px;width:13px;height:15px"><svg width="13" height="15" viewBox="0 0 13 15"><path d="M.5 1h6.6l3.4 3.4V14.3H.5z" fill="#f1f1f1" stroke="#b3b3b3"/><path d="M7.1 1v3.4h3.4" fill="#dcdcdc" stroke="#b3b3b3" stroke-width=".8"/></svg></div>
<div class="cell" style="left:53.5px;top:677.5px;letter-spacing:0.530px">Klinik für Anästhesie WKK Brunsbüttel</div>
<div class="cell" style="left:439px;top:670.2px;letter-spacing:0.509px">Anästhesie und Schmerzbehandlung</div>
<div class="cell" style="left:439px;top:686.2px;letter-spacing:0.580px">beim WKK in Brunsbüttel</div>
<div class="cell" style="left:732px;top:662.2px;letter-spacing:0.494px">Allgemeinanästhesie, Narkose, Regionalanästhesie und</div>
<div class="cell" style="left:732px;top:678.2px;letter-spacing:0.561px">Schmerztherapie nach der Operation: Die Klinik für Anästhesie des</div>
<div class="cell" style="left:732px;top:694.2px;letter-spacing:0.613px">WKK in Brunsbüttel.</div>
<div class="a" style="left:28.5px;top:716.0px;width:1px;height:27.3px;border-left:1px dotted #a0a0a0"></div>
<div class="a" style="left:30px;top:729.6px;width:7px;height:1px;border-top:1px dotted #a0a0a0"></div>
<div class="a" style="left:40px;top:722.9px;width:13px;height:15px"><svg width="13" height="15" viewBox="0 0 13 15"><path d="M.5 1h6.6l3.4 3.4V14.3H.5z" fill="#f1f1f1" stroke="#b3b3b3"/><path d="M7.1 1v3.4h3.4" fill="#dcdcdc" stroke="#b3b3b3" stroke-width=".8"/><rect x="3.5" y="6.5" width="9" height="8.3" fill="#fff" stroke="#3a3a3a" stroke-width="1"/><path d="M5.3 12.8c.2-2.2 1.5-3.3 3.6-3.3v-1.4l2.2 2.2-2.2 2.2v-1.3c-1.4 0-2.6.5-3.6 1.6z" fill="#111"/></svg></div>
<div class="cell" style="left:53.5px;top:721.6px;letter-spacing:0.580px">Chirurgie</div>
<div class="a" style="left:28.5px;top:759.2px;width:1px;height:28.6px;border-left:1px dotted #a0a0a0"></div>
<div class="a" style="left:30px;top:773.5px;width:7px;height:1px;border-top:1px dotted #a0a0a0"></div>
<div class="a" style="left:40px;top:766.7px;width:13px;height:15px"><svg width="13" height="15" viewBox="0 0 13 15"><path d="M.5 1h6.6l3.4 3.4V14.3H.5z" fill="#f1f1f1" stroke="#b3b3b3"/><path d="M7.1 1v3.4h3.4" fill="#dcdcdc" stroke="#b3b3b3" stroke-width=".8"/></svg></div>
<div class="cell" style="left:53.5px;top:765.5px;letter-spacing:0.580px">Klinik für Viszeral-, Thorax- und Gefäßchirurgie W...</div>
<div class="cell" style="left:439px;top:758.3px;letter-spacing:0.490px">Chirurgie WKK Heide – Viszeral-,</div>
<div class="cell" style="left:439px;top:774.3px;letter-spacing:0.540px">Thorax- und Gefäßchirurgie</div>
<div class="cell" style="left:732px;top:750.3px;letter-spacing:0.539px">Chirurgie WKK Heide – Viszeral-, Thorax- und Gefäßchirurgie:</div>
<div class="cell" style="left:732px;top:766.3px;letter-spacing:0.512px">Operationen, auch minimalinvasiv als Schlüsselloch-OP an Bauch,</div>
<div class="cell" style="left:732px;top:782.3px;letter-spacing:0.497px">Magen, Lunge und Gefäßen.</div>
<div class="a" style="left:28.5px;top:803.7px;width:1px;height:28.3px;border-left:1px dotted #a0a0a0"></div>
<div class="a" style="left:30px;top:817.9px;width:7px;height:1px;border-top:1px dotted #a0a0a0"></div>
<div class="a" style="left:40px;top:811.1px;width:13px;height:15px"><svg width="13" height="15" viewBox="0 0 13 15"><path d="M.5 1h6.6l3.4 3.4V14.3H.5z" fill="#f1f1f1" stroke="#b3b3b3"/><path d="M7.1 1v3.4h3.4" fill="#dcdcdc" stroke="#b3b3b3" stroke-width=".8"/></svg></div>
<div class="cell" style="left:53.5px;top:809.9px;letter-spacing:0.517px">Klinik für Gefäßchirurgie</div>
</div>
<svg class="a" style="left:0;top:0;pointer-events:none" width="1600" height="935" viewBox="0 0 1600 935"><line x1="685.4" y1="141" x2="631" y2="67" stroke="#ee1822" stroke-width="2.8" stroke-linecap="round"/><path d="M625 60.2L627 74.5L638.5 66.3z" fill="#ee1822"/><line x1="670" y1="213.7" x2="598" y2="214.3" stroke="#ee1822" stroke-width="2.6" stroke-linecap="round"/><path d="M586.9 214.6L599.7 207.8L599.7 221z" fill="#ee1822"/></svg>
</body></html>
